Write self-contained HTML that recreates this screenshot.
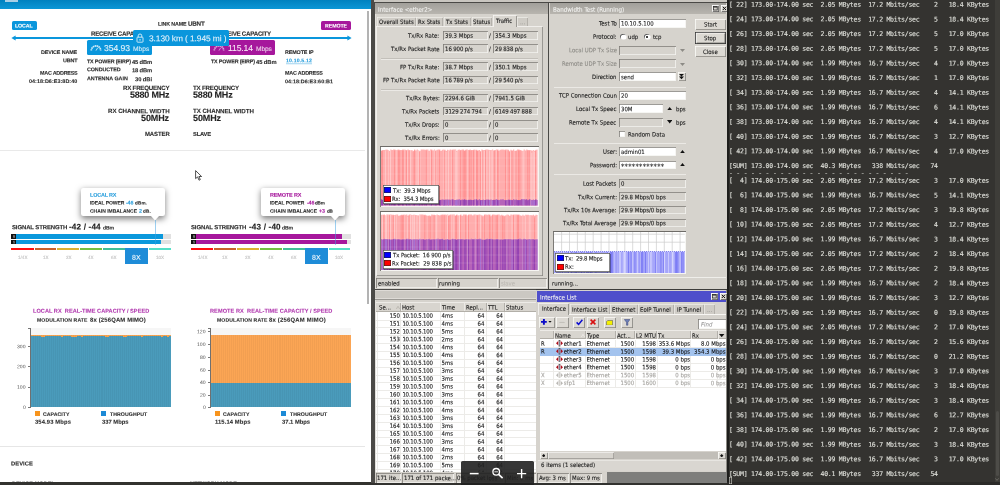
<!DOCTYPE html>
<html><head><meta charset="utf-8"><title>link test</title>
<style>
html,body{margin:0;padding:0;background:#d6d3cd}
#root{position:relative;width:1000px;height:485px;overflow:hidden;background:#d6d3cd;will-change:transform;font-family:"Liberation Sans",sans-serif}
#root div,#root svg,#root span{position:absolute;white-space:pre}
.s{font-family:"Liberation Sans",sans-serif}
.d{-webkit-text-stroke:.1px;font-family:"DejaVu Sans Condensed","DejaVu Sans","Liberation Sans",sans-serif}
.r{left:0;width:1000px;height:7.8px;font-size:6px;line-height:7.8px;color:#141414}
.m{-webkit-text-stroke:.16px;left:729.4px;font-family:"DejaVu Sans Mono","Liberation Mono",monospace;font-size:6.5px;line-height:8px;letter-spacing:-0.2515px;color:#dcddd7}
</style></head><body><div id="root">
<div id="M" style="left:371px;top:0;width:357px;height:485px;background:#d6d3cd"></div>
<div style="left:371.00px;top:0.00px;width:3.60px;height:485.00px;background:#4b4a47;"></div>
<div style="left:374.60px;top:0.00px;width:0.90px;height:485.00px;background:#e3e1dc;"></div>
<div style="left:374.00px;top:0.00px;width:353.00px;height:2.00px;background:#c9c6c0;"></div>
<div style="left:374.00px;top:2.00px;width:353.00px;height:1.00px;background:#4a4946;"></div>
<div style="left:548.40px;top:2.00px;width:1.00px;height:288.00px;background:#4a4946;"></div>
<div style="left:374.60px;top:289.00px;width:352.00px;height:1.10px;background:#4a4946;"></div>
<div style="left:375.00px;top:3.00px;width:173.00px;height:11.20px;background:linear-gradient(#a19f9a,#b8b5af);"></div>
<div class="d" style="left:378.00px;top:5px;transform:matrix(1,.0005,0,1,0,0.75);font-size:6.2px;line-height:8.06px;color:#f4f4f2;">Interface &lt;ether2&gt;</div>
<div style="left:377px;top:17px;width:38.5px;height:9px;background:#d0cdc7;box-shadow:inset .7px .7px 0 #efeeea,inset -.7px 0 0 #a9a6a0"></div>
<div class="d" style="left:378.86px;top:17px;transform:matrix(1,.0005,0,1,0,0.92);font-size:6px;line-height:7.8px;color:#1a1a1a;">Overall Stats</div>
<div style="left:416px;top:17px;width:26.5px;height:9px;background:#d0cdc7;box-shadow:inset .7px .7px 0 #efeeea,inset -.7px 0 0 #a9a6a0"></div>
<div class="d" style="left:418.03px;top:17px;transform:matrix(1,.0005,0,1,0,0.92);font-size:6px;line-height:7.8px;color:#1a1a1a;">Rx Stats</div>
<div style="left:443.5px;top:17px;width:27.0px;height:9px;background:#d0cdc7;box-shadow:inset .7px .7px 0 #efeeea,inset -.7px 0 0 #a9a6a0"></div>
<div class="d" style="left:446.01px;top:17px;transform:matrix(1,.0005,0,1,0,0.92);font-size:6px;line-height:7.8px;color:#1a1a1a;">Tx Stats</div>
<div style="left:471.5px;top:17px;width:20.5px;height:9px;background:#d0cdc7;box-shadow:inset .7px .7px 0 #efeeea,inset -.7px 0 0 #a9a6a0"></div>
<div class="d" style="left:473.15px;top:17px;transform:matrix(1,.0005,0,1,0,0.92);font-size:6px;line-height:7.8px;color:#1a1a1a;">Status</div>
<div style="left:517px;top:17px;width:11px;height:9px;background:#cfccc6;box-shadow:inset .7px .7px 0 #efeeea,inset -.7px 0 0 #a9a6a0"></div>
<div class="d" style="left:519.92px;top:18px;transform:matrix(1,.0005,0,1,0,0.22);font-size:6px;line-height:7.8px;color:#9a9893;">...</div>
<div style="left:376px;top:26px;width:166.5px;height:250px;background:#d9d6d0;box-shadow:inset .8px .8px 0 #f7f6f3,inset -.8px -.8px 0 #8b8984"></div>
<div style="left:492.5px;top:15px;width:24px;height:12px;background:#d9d6d0;box-shadow:inset .8px .8px 0 #f7f6f3,inset -.8px 0 0 #8b8984"></div>
<div class="d" style="left:496.43px;top:16px;transform:matrix(1,.0005,0,1,0,0.92);font-size:6px;line-height:7.8px;color:#1a1a1a;">Traffic</div>
<div class="d" style="left:408.44px;top:31px;transform:matrix(1,.0005,0,1,0,0.82);font-size:6px;line-height:7.8px;color:#1a1a1a;">Tx/Rx Rate:</div>
<div style="left:443.00px;top:31.00px;width:44.60px;height:8.80px;background:#d6d3cd;box-shadow:inset .8px .8px 0 #7d7b76,inset -.8px -.8px 0 #f4f3f0"></div>
<div class="d" style="left:445.20px;top:31px;transform:matrix(1,.0005,0,1,0,0.82);font-size:6px;line-height:7.8px;color:#1a1a1a;">39.3 Mbps</div>
<div class="d" style="left:489.30px;top:31px;transform:matrix(1,.0005,0,1,0,0.82);font-size:6px;line-height:7.8px;color:#1a1a1a;">/</div>
<div style="left:493.00px;top:31.00px;width:45.00px;height:8.80px;background:#d6d3cd;box-shadow:inset .8px .8px 0 #7d7b76,inset -.8px -.8px 0 #f4f3f0"></div>
<div class="d" style="left:495.20px;top:31px;transform:matrix(1,.0005,0,1,0,0.82);font-size:6px;line-height:7.8px;color:#1a1a1a;">354.3 Mbps</div>
<div class="d" style="left:390.94px;top:45px;transform:matrix(1,.0005,0,1,0,0.12);font-size:6px;line-height:7.8px;color:#1a1a1a;">Tx/Rx Packet Rate</div>
<div style="left:443.00px;top:44.30px;width:44.60px;height:8.80px;background:#d6d3cd;box-shadow:inset .8px .8px 0 #7d7b76,inset -.8px -.8px 0 #f4f3f0"></div>
<div class="d" style="left:445.20px;top:45px;transform:matrix(1,.0005,0,1,0,0.12);font-size:6px;line-height:7.8px;color:#1a1a1a;word-spacing:-.45px;">16 900 p/s</div>
<div class="d" style="left:489.30px;top:45px;transform:matrix(1,.0005,0,1,0,0.12);font-size:6px;line-height:7.8px;color:#1a1a1a;">/</div>
<div style="left:493.00px;top:44.30px;width:45.00px;height:8.80px;background:#d6d3cd;box-shadow:inset .8px .8px 0 #7d7b76,inset -.8px -.8px 0 #f4f3f0"></div>
<div class="d" style="left:495.20px;top:45px;transform:matrix(1,.0005,0,1,0,0.12);font-size:6px;line-height:7.8px;color:#1a1a1a;word-spacing:-.45px;">29 838 p/s</div>
<div class="d" style="left:400.37px;top:63px;transform:matrix(1,.0005,0,1,0,0.22);font-size:6px;line-height:7.8px;color:#1a1a1a;">FP Tx/Rx Rate:</div>
<div style="left:443.00px;top:62.40px;width:44.60px;height:8.80px;background:#d6d3cd;box-shadow:inset .8px .8px 0 #7d7b76,inset -.8px -.8px 0 #f4f3f0"></div>
<div class="d" style="left:445.20px;top:63px;transform:matrix(1,.0005,0,1,0,0.22);font-size:6px;line-height:7.8px;color:#1a1a1a;">38.7 Mbps</div>
<div class="d" style="left:489.30px;top:63px;transform:matrix(1,.0005,0,1,0,0.22);font-size:6px;line-height:7.8px;color:#1a1a1a;">/</div>
<div style="left:493.00px;top:62.40px;width:45.00px;height:8.80px;background:#d6d3cd;box-shadow:inset .8px .8px 0 #7d7b76,inset -.8px -.8px 0 #f4f3f0"></div>
<div class="d" style="left:495.20px;top:63px;transform:matrix(1,.0005,0,1,0,0.22);font-size:6px;line-height:7.8px;color:#1a1a1a;">350.1 Mbps</div>
<div class="d" style="left:382.87px;top:76px;transform:matrix(1,.0005,0,1,0,0.32);font-size:6px;line-height:7.8px;color:#1a1a1a;">FP Tx/Rx Packet Rate</div>
<div style="left:443.00px;top:75.50px;width:44.60px;height:8.80px;background:#d6d3cd;box-shadow:inset .8px .8px 0 #7d7b76,inset -.8px -.8px 0 #f4f3f0"></div>
<div class="d" style="left:445.20px;top:76px;transform:matrix(1,.0005,0,1,0,0.32);font-size:6px;line-height:7.8px;color:#1a1a1a;word-spacing:-.45px;">16 789 p/s</div>
<div class="d" style="left:489.30px;top:76px;transform:matrix(1,.0005,0,1,0,0.32);font-size:6px;line-height:7.8px;color:#1a1a1a;">/</div>
<div style="left:493.00px;top:75.50px;width:45.00px;height:8.80px;background:#d6d3cd;box-shadow:inset .8px .8px 0 #7d7b76,inset -.8px -.8px 0 #f4f3f0"></div>
<div class="d" style="left:495.20px;top:76px;transform:matrix(1,.0005,0,1,0,0.32);font-size:6px;line-height:7.8px;color:#1a1a1a;word-spacing:-.45px;">29 540 p/s</div>
<div class="d" style="left:405.66px;top:94px;transform:matrix(1,.0005,0,1,0,0.32);font-size:6px;line-height:7.8px;color:#1a1a1a;">Tx/Rx Bytes:</div>
<div style="left:443.00px;top:93.50px;width:44.60px;height:8.80px;background:#d6d3cd;box-shadow:inset .8px .8px 0 #7d7b76,inset -.8px -.8px 0 #f4f3f0"></div>
<div class="d" style="left:445.20px;top:94px;transform:matrix(1,.0005,0,1,0,0.32);font-size:6px;line-height:7.8px;color:#1a1a1a;">2294.6 GiB</div>
<div class="d" style="left:489.30px;top:94px;transform:matrix(1,.0005,0,1,0,0.32);font-size:6px;line-height:7.8px;color:#1a1a1a;">/</div>
<div style="left:493.00px;top:93.50px;width:45.00px;height:8.80px;background:#d6d3cd;box-shadow:inset .8px .8px 0 #7d7b76,inset -.8px -.8px 0 #f4f3f0"></div>
<div class="d" style="left:495.20px;top:94px;transform:matrix(1,.0005,0,1,0,0.32);font-size:6px;line-height:7.8px;color:#1a1a1a;">7941.5 GiB</div>
<div class="d" style="left:402.21px;top:107px;transform:matrix(1,.0005,0,1,0,0.52);font-size:6px;line-height:7.8px;color:#1a1a1a;">Tx/Rx Packets</div>
<div style="left:443.00px;top:106.70px;width:44.60px;height:8.80px;background:#d6d3cd;box-shadow:inset .8px .8px 0 #7d7b76,inset -.8px -.8px 0 #f4f3f0"></div>
<div class="d" style="left:445.20px;top:107px;transform:matrix(1,.0005,0,1,0,0.52);font-size:6px;line-height:7.8px;color:#1a1a1a;word-spacing:-.45px;">3129 274 794</div>
<div class="d" style="left:489.30px;top:107px;transform:matrix(1,.0005,0,1,0,0.52);font-size:6px;line-height:7.8px;color:#1a1a1a;">/</div>
<div style="left:493.00px;top:106.70px;width:45.00px;height:8.80px;background:#d6d3cd;box-shadow:inset .8px .8px 0 #7d7b76,inset -.8px -.8px 0 #f4f3f0"></div>
<div class="d" style="left:495.20px;top:107px;transform:matrix(1,.0005,0,1,0,0.52);font-size:6px;line-height:7.8px;color:#1a1a1a;word-spacing:-.45px;">6149 497 888</div>
<div class="d" style="left:405.02px;top:120px;transform:matrix(1,.0005,0,1,0,0.82);font-size:6px;line-height:7.8px;color:#1a1a1a;">Tx/Rx Drops:</div>
<div style="left:443.00px;top:120.00px;width:44.60px;height:8.80px;background:#d6d3cd;box-shadow:inset .8px .8px 0 #7d7b76,inset -.8px -.8px 0 #f4f3f0"></div>
<div class="d" style="left:445.20px;top:120px;transform:matrix(1,.0005,0,1,0,0.82);font-size:6px;line-height:7.8px;color:#1a1a1a;">0</div>
<div class="d" style="left:489.30px;top:120px;transform:matrix(1,.0005,0,1,0,0.82);font-size:6px;line-height:7.8px;color:#1a1a1a;">/</div>
<div style="left:493.00px;top:120.00px;width:45.00px;height:8.80px;background:#d6d3cd;box-shadow:inset .8px .8px 0 #7d7b76,inset -.8px -.8px 0 #f4f3f0"></div>
<div class="d" style="left:495.20px;top:120px;transform:matrix(1,.0005,0,1,0,0.82);font-size:6px;line-height:7.8px;color:#1a1a1a;">0</div>
<div class="d" style="left:404.87px;top:134px;transform:matrix(1,.0005,0,1,0,0.02);font-size:6px;line-height:7.8px;color:#1a1a1a;">Tx/Rx Errors:</div>
<div style="left:443.00px;top:133.20px;width:44.60px;height:8.80px;background:#d6d3cd;box-shadow:inset .8px .8px 0 #7d7b76,inset -.8px -.8px 0 #f4f3f0"></div>
<div class="d" style="left:445.20px;top:134px;transform:matrix(1,.0005,0,1,0,0.02);font-size:6px;line-height:7.8px;color:#1a1a1a;">0</div>
<div class="d" style="left:489.30px;top:134px;transform:matrix(1,.0005,0,1,0,0.02);font-size:6px;line-height:7.8px;color:#1a1a1a;">/</div>
<div style="left:493.00px;top:133.20px;width:45.00px;height:8.80px;background:#d6d3cd;box-shadow:inset .8px .8px 0 #7d7b76,inset -.8px -.8px 0 #f4f3f0"></div>
<div class="d" style="left:495.20px;top:134px;transform:matrix(1,.0005,0,1,0,0.02);font-size:6px;line-height:7.8px;color:#1a1a1a;">0</div>
<div style="left:381.00px;top:58.10px;width:157.00px;height:0.60px;background:#c3c0ba;"></div>
<div style="left:381.00px;top:58.70px;width:157.00px;height:0.60px;background:#ebe9e5;"></div>
<div style="left:381.00px;top:89.20px;width:157.00px;height:0.60px;background:#c3c0ba;"></div>
<div style="left:381.00px;top:89.80px;width:157.00px;height:0.60px;background:#ebe9e5;"></div>
<div style="left:380px;top:146px;width:158.5px;height:60.5px;background:#fff;box-shadow:inset .9px .9px 0 #6e6c68,inset -.9px -.9px 0 #f6f5f2"></div>
<svg style="left:381px;top:147px" width="156.5" height="58.5" viewBox="0 0 156.5 58.5"><rect x="0" y="3.80" width="156.5" height="54.70" fill="#ffadad"/><rect x="0" y="53.00" width="156.5" height="5.50" fill="#b663b9"/><path d="M0.00 3.50h1.32V4.00h-1.32ZM1.32 2.90h1.32V4.00h-1.32ZM2.64 3.10h1.32V4.00h-1.32ZM3.96 2.80h1.32V4.00h-1.32ZM5.28 2.60h1.32V4.00h-1.32ZM6.60 3.10h1.32V4.00h-1.32ZM7.92 5.10h1.32V4.00h-1.32ZM9.24 2.60h1.32V4.00h-1.32ZM10.56 2.90h1.32V4.00h-1.32ZM11.88 2.60h1.32V4.00h-1.32ZM13.20 2.60h1.32V4.00h-1.32ZM14.52 3.10h1.32V4.00h-1.32ZM15.84 2.80h1.32V4.00h-1.32ZM17.16 2.60h1.32V4.00h-1.32ZM18.48 2.90h1.32V4.00h-1.32ZM19.80 2.90h1.32V4.00h-1.32ZM21.12 2.60h1.32V4.00h-1.32ZM22.44 2.60h1.32V4.00h-1.32ZM23.76 2.80h1.32V4.00h-1.32ZM25.08 3.10h1.32V4.00h-1.32ZM26.40 2.60h1.32V4.00h-1.32ZM27.72 3.10h1.32V4.00h-1.32ZM29.04 3.50h1.32V4.00h-1.32ZM30.36 3.10h1.32V4.00h-1.32ZM31.68 4.20h1.32V4.00h-1.32ZM33.00 2.60h1.32V4.00h-1.32ZM34.32 3.50h1.32V4.00h-1.32ZM35.64 2.60h1.32V4.00h-1.32ZM36.96 3.50h1.32V4.00h-1.32ZM38.28 4.20h1.32V4.00h-1.32ZM39.60 2.60h1.32V4.00h-1.32ZM40.92 2.60h1.32V4.00h-1.32ZM42.24 2.60h1.32V4.00h-1.32ZM43.56 2.80h1.32V4.00h-1.32ZM44.88 2.60h1.32V4.00h-1.32ZM46.20 2.60h1.32V4.00h-1.32ZM47.52 5.10h1.32V4.00h-1.32ZM48.84 2.60h1.32V4.00h-1.32ZM50.16 2.60h1.32V4.00h-1.32ZM51.48 3.50h1.32V4.00h-1.32ZM52.80 2.60h1.32V4.00h-1.32ZM54.12 3.50h1.32V4.00h-1.32ZM55.44 2.80h1.32V4.00h-1.32ZM56.76 2.60h1.32V4.00h-1.32ZM58.08 2.60h1.32V4.00h-1.32ZM59.40 4.20h1.32V4.00h-1.32ZM60.72 2.80h1.32V4.00h-1.32ZM62.04 2.60h1.32V4.00h-1.32ZM63.36 2.80h1.32V4.00h-1.32ZM64.68 4.20h1.32V4.00h-1.32ZM66.00 2.80h1.32V4.00h-1.32ZM67.32 3.50h1.32V4.00h-1.32ZM68.64 2.60h1.32V4.00h-1.32ZM69.96 2.80h1.32V4.00h-1.32ZM71.28 2.60h1.32V4.00h-1.32ZM72.60 2.60h1.32V4.00h-1.32ZM73.92 2.60h1.32V4.00h-1.32ZM75.24 4.20h1.32V4.00h-1.32ZM76.56 2.80h1.32V4.00h-1.32ZM77.88 2.60h1.32V4.00h-1.32ZM79.20 2.90h1.32V4.00h-1.32ZM80.52 2.60h1.32V4.00h-1.32ZM81.84 2.60h1.32V4.00h-1.32ZM83.16 3.50h1.32V4.00h-1.32ZM84.48 2.60h1.32V4.00h-1.32ZM85.80 2.60h1.32V4.00h-1.32ZM87.12 3.10h1.32V4.00h-1.32ZM88.44 2.60h1.32V4.00h-1.32ZM89.76 2.90h1.32V4.00h-1.32ZM91.08 3.10h1.32V4.00h-1.32ZM92.40 2.60h1.32V4.00h-1.32ZM93.72 2.80h1.32V4.00h-1.32ZM95.04 2.80h1.32V4.00h-1.32ZM96.36 3.50h1.32V4.00h-1.32ZM97.68 2.90h1.32V4.00h-1.32ZM99.00 4.50h1.32V4.00h-1.32ZM100.32 2.60h1.32V4.00h-1.32ZM101.64 2.90h1.32V4.00h-1.32ZM102.96 3.10h1.32V4.00h-1.32ZM104.28 2.60h1.32V4.00h-1.32ZM105.60 2.60h1.32V4.00h-1.32ZM106.92 2.80h1.32V4.00h-1.32ZM108.24 2.90h1.32V4.00h-1.32ZM109.56 2.90h1.32V4.00h-1.32ZM110.88 2.60h1.32V4.00h-1.32ZM112.20 3.50h1.32V4.00h-1.32ZM113.52 2.90h1.32V4.00h-1.32ZM114.84 2.60h1.32V4.00h-1.32ZM116.16 2.60h1.32V4.00h-1.32ZM117.48 3.50h1.32V4.00h-1.32ZM118.80 2.80h1.32V4.00h-1.32ZM120.12 2.60h1.32V4.00h-1.32ZM121.44 2.60h1.32V4.00h-1.32ZM122.76 2.80h1.32V4.00h-1.32ZM124.08 2.60h1.32V4.00h-1.32ZM125.40 2.60h1.32V4.00h-1.32ZM126.72 2.80h1.32V4.00h-1.32ZM128.04 4.50h1.32V4.00h-1.32ZM129.36 2.80h1.32V4.00h-1.32ZM130.68 3.50h1.32V4.00h-1.32ZM132.00 2.60h1.32V4.00h-1.32ZM133.32 4.20h1.32V4.00h-1.32ZM134.64 3.50h1.32V4.00h-1.32ZM135.96 2.60h1.32V4.00h-1.32ZM137.28 2.60h1.32V4.00h-1.32ZM138.60 2.90h1.32V4.00h-1.32ZM139.92 3.50h1.32V4.00h-1.32ZM141.24 5.10h1.32V4.00h-1.32ZM142.56 2.60h1.32V4.00h-1.32ZM143.88 3.50h1.32V4.00h-1.32ZM145.20 2.60h1.32V4.00h-1.32ZM146.52 2.90h1.32V4.00h-1.32ZM147.84 3.10h1.32V4.00h-1.32ZM149.16 3.10h1.32V4.00h-1.32ZM150.48 5.10h1.32V4.00h-1.32ZM151.80 2.90h1.32V4.00h-1.32ZM153.12 4.20h1.32V4.00h-1.32ZM154.44 2.80h1.32V4.00h-1.32ZM155.76 2.60h0.74V4.00h-0.74Z" fill="#ffadad"/><path d="M0.00 52.30h1.32V53.20h-1.32ZM1.32 52.80h1.32V53.20h-1.32ZM2.64 52.80h1.32V53.20h-1.32ZM3.96 52.90h1.32V53.20h-1.32ZM5.28 52.90h1.32V53.20h-1.32ZM6.60 52.90h1.32V53.20h-1.32ZM7.92 52.90h1.32V53.20h-1.32ZM9.24 52.80h1.32V53.20h-1.32ZM10.56 52.30h1.32V53.20h-1.32ZM11.88 52.60h1.32V53.20h-1.32ZM13.20 52.30h1.32V53.20h-1.32ZM14.52 52.60h1.32V53.20h-1.32ZM15.84 52.90h1.32V53.20h-1.32ZM17.16 52.60h1.32V53.20h-1.32ZM18.48 52.60h1.32V53.20h-1.32ZM19.80 52.80h1.32V53.20h-1.32ZM21.12 52.60h1.32V53.20h-1.32ZM22.44 52.80h1.32V53.20h-1.32ZM23.76 53.10h1.32V53.20h-1.32ZM25.08 52.60h1.32V53.20h-1.32ZM26.40 52.60h1.32V53.20h-1.32ZM27.72 52.90h1.32V53.20h-1.32ZM29.04 52.60h1.32V53.20h-1.32ZM30.36 52.60h1.32V53.20h-1.32ZM31.68 52.90h1.32V53.20h-1.32ZM33.00 52.30h1.32V53.20h-1.32ZM34.32 52.60h1.32V53.20h-1.32ZM35.64 53.10h1.32V53.20h-1.32ZM36.96 53.10h1.32V53.20h-1.32ZM38.28 52.90h1.32V53.20h-1.32ZM39.60 53.10h1.32V53.20h-1.32ZM40.92 52.30h1.32V53.20h-1.32ZM42.24 52.80h1.32V53.20h-1.32ZM43.56 52.90h1.32V53.20h-1.32ZM44.88 52.60h1.32V53.20h-1.32ZM46.20 52.30h1.32V53.20h-1.32ZM47.52 52.60h1.32V53.20h-1.32ZM48.84 53.10h1.32V53.20h-1.32ZM50.16 52.30h1.32V53.20h-1.32ZM51.48 52.90h1.32V53.20h-1.32ZM52.80 52.80h1.32V53.20h-1.32ZM54.12 52.90h1.32V53.20h-1.32ZM55.44 52.80h1.32V53.20h-1.32ZM56.76 52.30h1.32V53.20h-1.32ZM58.08 53.10h1.32V53.20h-1.32ZM59.40 52.80h1.32V53.20h-1.32ZM60.72 52.60h1.32V53.20h-1.32ZM62.04 52.60h1.32V53.20h-1.32ZM63.36 52.60h1.32V53.20h-1.32ZM64.68 52.60h1.32V53.20h-1.32ZM66.00 52.60h1.32V53.20h-1.32ZM67.32 52.60h1.32V53.20h-1.32ZM68.64 52.80h1.32V53.20h-1.32ZM69.96 52.60h1.32V53.20h-1.32ZM71.28 52.30h1.32V53.20h-1.32ZM72.60 52.90h1.32V53.20h-1.32ZM73.92 52.90h1.32V53.20h-1.32ZM75.24 52.60h1.32V53.20h-1.32ZM76.56 52.60h1.32V53.20h-1.32ZM77.88 52.30h1.32V53.20h-1.32ZM79.20 52.90h1.32V53.20h-1.32ZM80.52 52.60h1.32V53.20h-1.32ZM81.84 52.60h1.32V53.20h-1.32ZM83.16 52.30h1.32V53.20h-1.32ZM84.48 52.80h1.32V53.20h-1.32ZM85.80 53.10h1.32V53.20h-1.32ZM87.12 52.80h1.32V53.20h-1.32ZM88.44 52.60h1.32V53.20h-1.32ZM89.76 52.80h1.32V53.20h-1.32ZM91.08 53.10h1.32V53.20h-1.32ZM92.40 52.60h1.32V53.20h-1.32ZM93.72 52.60h1.32V53.20h-1.32ZM95.04 52.30h1.32V53.20h-1.32ZM96.36 53.10h1.32V53.20h-1.32ZM97.68 52.30h1.32V53.20h-1.32ZM99.00 52.90h1.32V53.20h-1.32ZM100.32 53.10h1.32V53.20h-1.32ZM101.64 52.60h1.32V53.20h-1.32ZM102.96 53.10h1.32V53.20h-1.32ZM104.28 52.60h1.32V53.20h-1.32ZM105.60 52.60h1.32V53.20h-1.32ZM106.92 52.60h1.32V53.20h-1.32ZM108.24 52.80h1.32V53.20h-1.32ZM109.56 52.60h1.32V53.20h-1.32ZM110.88 53.10h1.32V53.20h-1.32ZM112.20 52.80h1.32V53.20h-1.32ZM113.52 52.80h1.32V53.20h-1.32ZM114.84 52.30h1.32V53.20h-1.32ZM116.16 52.60h1.32V53.20h-1.32ZM117.48 52.90h1.32V53.20h-1.32ZM118.80 52.60h1.32V53.20h-1.32ZM120.12 52.60h1.32V53.20h-1.32ZM121.44 52.30h1.32V53.20h-1.32ZM122.76 53.10h1.32V53.20h-1.32ZM124.08 53.10h1.32V53.20h-1.32ZM125.40 52.90h1.32V53.20h-1.32ZM126.72 52.60h1.32V53.20h-1.32ZM128.04 52.60h1.32V53.20h-1.32ZM129.36 52.80h1.32V53.20h-1.32ZM130.68 52.90h1.32V53.20h-1.32ZM132.00 52.30h1.32V53.20h-1.32ZM133.32 52.80h1.32V53.20h-1.32ZM134.64 52.60h1.32V53.20h-1.32ZM135.96 52.90h1.32V53.20h-1.32ZM137.28 52.90h1.32V53.20h-1.32ZM138.60 52.90h1.32V53.20h-1.32ZM139.92 52.30h1.32V53.20h-1.32ZM141.24 52.30h1.32V53.20h-1.32ZM142.56 52.30h1.32V53.20h-1.32ZM143.88 52.60h1.32V53.20h-1.32ZM145.20 52.30h1.32V53.20h-1.32ZM146.52 53.10h1.32V53.20h-1.32ZM147.84 52.30h1.32V53.20h-1.32ZM149.16 52.60h1.32V53.20h-1.32ZM150.48 53.10h1.32V53.20h-1.32ZM151.80 52.60h1.32V53.20h-1.32ZM153.12 53.10h1.32V53.20h-1.32ZM154.44 52.30h1.32V53.20h-1.32ZM155.76 52.90h0.74V53.20h-0.74Z" fill="#b663b9"/><path d="M0.00 4.10h.6V52.30h-.6ZM1.32 3.50h.6V52.80h-.6ZM13.20 3.20h.6V52.30h-.6ZM17.16 3.20h.6V52.60h-.6ZM18.48 3.50h.6V52.60h-.6ZM21.12 3.20h.6V52.60h-.6ZM22.44 3.20h.6V52.80h-.6ZM25.08 3.70h.6V52.60h-.6ZM27.72 3.70h.6V52.90h-.6ZM31.68 4.80h.6V52.90h-.6ZM33.00 3.20h.6V52.30h-.6ZM38.28 4.80h.6V52.90h-.6ZM44.88 3.20h.6V52.60h-.6ZM50.16 3.20h.6V52.30h-.6ZM54.12 4.10h.6V52.90h-.6ZM58.08 3.20h.6V53.10h-.6ZM63.36 3.40h.6V52.60h-.6ZM71.28 3.20h.6V52.30h-.6ZM77.88 3.20h.6V52.30h-.6ZM79.20 3.50h.6V52.90h-.6ZM81.84 3.20h.6V52.60h-.6ZM83.16 4.10h.6V52.30h-.6ZM84.48 3.20h.6V52.80h-.6ZM88.44 3.20h.6V52.60h-.6ZM89.76 3.50h.6V52.80h-.6ZM92.40 3.20h.6V52.60h-.6ZM95.04 3.40h.6V52.30h-.6ZM96.36 4.10h.6V53.10h-.6ZM99.00 5.10h.6V52.90h-.6ZM101.64 3.50h.6V52.60h-.6ZM104.28 3.20h.6V52.60h-.6ZM113.52 3.50h.6V52.80h-.6ZM116.16 3.20h.6V52.60h-.6ZM117.48 4.10h.6V52.90h-.6ZM124.08 3.20h.6V53.10h-.6ZM126.72 3.40h.6V52.60h-.6ZM128.04 5.10h.6V52.60h-.6ZM130.68 4.10h.6V52.90h-.6ZM134.64 4.10h.6V52.60h-.6ZM137.28 3.20h.6V52.90h-.6ZM138.60 3.50h.6V52.90h-.6ZM146.52 3.50h.6V53.10h-.6ZM147.84 3.70h.6V52.30h-.6ZM154.44 3.40h.6V52.30h-.6Z" fill="#ff8282"/><path d="M0.00 52.60h.7V58.5h-.7ZM1.32 53.10h.7V58.5h-.7ZM13.20 52.60h.7V58.5h-.7ZM17.16 52.90h.7V58.5h-.7ZM18.48 52.90h.7V58.5h-.7ZM21.12 52.90h.7V58.5h-.7ZM22.44 53.10h.7V58.5h-.7ZM25.08 52.90h.7V58.5h-.7ZM27.72 53.20h.7V58.5h-.7ZM31.68 53.20h.7V58.5h-.7ZM33.00 52.60h.7V58.5h-.7ZM38.28 53.20h.7V58.5h-.7ZM44.88 52.90h.7V58.5h-.7ZM50.16 52.60h.7V58.5h-.7ZM54.12 53.20h.7V58.5h-.7ZM58.08 53.40h.7V58.5h-.7ZM63.36 52.90h.7V58.5h-.7ZM71.28 52.60h.7V58.5h-.7ZM77.88 52.60h.7V58.5h-.7ZM79.20 53.20h.7V58.5h-.7ZM81.84 52.90h.7V58.5h-.7ZM83.16 52.60h.7V58.5h-.7ZM84.48 53.10h.7V58.5h-.7ZM88.44 52.90h.7V58.5h-.7ZM89.76 53.10h.7V58.5h-.7ZM92.40 52.90h.7V58.5h-.7ZM95.04 52.60h.7V58.5h-.7ZM96.36 53.40h.7V58.5h-.7ZM99.00 53.20h.7V58.5h-.7ZM101.64 52.90h.7V58.5h-.7ZM104.28 52.90h.7V58.5h-.7ZM113.52 53.10h.7V58.5h-.7ZM116.16 52.90h.7V58.5h-.7ZM117.48 53.20h.7V58.5h-.7ZM124.08 53.40h.7V58.5h-.7ZM126.72 52.90h.7V58.5h-.7ZM128.04 52.90h.7V58.5h-.7ZM130.68 53.20h.7V58.5h-.7ZM134.64 52.90h.7V58.5h-.7ZM137.28 53.20h.7V58.5h-.7ZM138.60 53.20h.7V58.5h-.7ZM146.52 53.40h.7V58.5h-.7ZM147.84 52.60h.7V58.5h-.7ZM154.44 52.60h.7V58.5h-.7Z" fill="#8636b0"/><path d="M3.96 3.40h.7V52.90h-.7ZM9.24 3.20h.7V52.80h-.7ZM26.40 3.20h.7V52.60h-.7ZM29.04 4.10h.7V52.60h-.7ZM35.64 3.20h.7V53.10h-.7ZM36.96 4.10h.7V53.10h-.7ZM48.84 3.20h.7V53.10h-.7ZM52.80 3.20h.7V52.80h-.7ZM64.68 4.80h.7V52.60h-.7ZM67.32 4.10h.7V52.60h-.7ZM73.92 3.20h.7V52.90h-.7ZM75.24 4.80h.7V52.60h-.7ZM76.56 3.40h.7V52.60h-.7ZM100.32 3.20h.7V53.10h-.7ZM102.96 3.70h.7V53.10h-.7ZM105.60 3.20h.7V52.60h-.7ZM108.24 3.50h.7V52.80h-.7ZM110.88 3.20h.7V53.10h-.7ZM114.84 3.20h.7V52.30h-.7ZM129.36 3.40h.7V52.80h-.7ZM142.56 3.20h.7V52.30h-.7ZM150.48 5.70h.7V53.10h-.7ZM151.80 3.50h.7V52.60h-.7ZM153.12 4.80h.7V53.10h-.7ZM155.76 3.20h.7V52.90h-.7Z" fill="#ffd2d2"/><path d="M3.96 53.20h.7V58.5h-.7ZM9.24 53.10h.7V58.5h-.7ZM26.40 52.90h.7V58.5h-.7ZM29.04 52.90h.7V58.5h-.7ZM35.64 53.40h.7V58.5h-.7ZM36.96 53.40h.7V58.5h-.7ZM48.84 53.40h.7V58.5h-.7ZM52.80 53.10h.7V58.5h-.7ZM64.68 52.90h.7V58.5h-.7ZM67.32 52.90h.7V58.5h-.7ZM73.92 53.20h.7V58.5h-.7ZM75.24 52.90h.7V58.5h-.7ZM76.56 52.90h.7V58.5h-.7ZM100.32 53.40h.7V58.5h-.7ZM102.96 53.40h.7V58.5h-.7ZM105.60 52.90h.7V58.5h-.7ZM108.24 53.10h.7V58.5h-.7ZM110.88 53.40h.7V58.5h-.7ZM114.84 52.60h.7V58.5h-.7ZM129.36 53.10h.7V58.5h-.7ZM142.56 52.60h.7V58.5h-.7ZM150.48 53.40h.7V58.5h-.7ZM151.80 52.90h.7V58.5h-.7ZM153.12 53.40h.7V58.5h-.7ZM155.76 53.20h.7V58.5h-.7Z" fill="#a078dc"/><path d="M7.92 53.20h.6V58.5h-.6ZM10.56 52.60h.6V58.5h-.6ZM11.88 52.90h.6V58.5h-.6ZM14.52 52.90h.6V58.5h-.6ZM39.60 53.40h.6V58.5h-.6ZM40.92 52.60h.6V58.5h-.6ZM43.56 53.20h.6V58.5h-.6ZM55.44 53.10h.6V58.5h-.6ZM59.40 53.10h.6V58.5h-.6ZM62.04 52.90h.6V58.5h-.6ZM85.80 53.40h.6V58.5h-.6ZM87.12 53.10h.6V58.5h-.6ZM106.92 52.90h.6V58.5h-.6ZM112.20 53.10h.6V58.5h-.6ZM125.40 53.20h.6V58.5h-.6ZM133.32 53.10h.6V58.5h-.6ZM135.96 53.20h.6V58.5h-.6ZM139.92 52.60h.6V58.5h-.6ZM141.24 52.60h.6V58.5h-.6ZM143.88 52.90h.6V58.5h-.6ZM145.20 52.60h.6V58.5h-.6Z" fill="#8e3cb4"/><path d="M7.50 0V58.5M15.40 0V58.5M23.30 0V58.5M31.20 0V58.5M39.10 0V58.5M47.00 0V58.5M54.90 0V58.5M62.80 0V58.5M70.70 0V58.5M78.60 0V58.5M86.50 0V58.5M94.40 0V58.5M102.30 0V58.5M110.20 0V58.5M118.10 0V58.5M126.00 0V58.5M133.90 0V58.5M141.80 0V58.5M149.70 0V58.5" stroke="#fff" stroke-opacity=".32" stroke-width=".7" fill="none"/><path d="M0 51.00H156.5M0 43.00H156.5M0 35.00H156.5M0 27.00H156.5M0 19.00H156.5M0 11.00H156.5M0 3.00H156.5" stroke="#fff" stroke-opacity=".2" stroke-width=".6" fill="none"/></svg>
<div style="left:382.5px;top:185.3px;width:56px;height:18.8px;background:#fff;box-shadow:inset 0 0 0 .7px #555,1px 1px 0 rgba(0,0,0,.35)"></div>
<div style="left:384.20px;top:187.40px;width:6.80px;height:6.00px;background:#0000fe;box-shadow:inset 0 0 0 .5px #222"></div>
<div style="left:384.20px;top:195.60px;width:6.80px;height:6.00px;background:#fe0000;box-shadow:inset 0 0 0 .5px #222"></div>
<div class="d" style="left:392.50px;top:186px;transform:matrix(1,.0005,0,1,0,0.72);font-size:6px;line-height:7.8px;color:#1a1a1a;letter-spacing:-0.164px;">Tx:  39.3 Mbps</div>
<div class="d" style="left:392.30px;top:194px;transform:matrix(1,.0005,0,1,0,0.92);font-size:6px;line-height:7.8px;color:#1a1a1a;letter-spacing:-0.146px;">Rx:  354.3 Mbps</div>
<div style="left:380px;top:210.5px;width:158.5px;height:60.5px;background:#fff;box-shadow:inset .9px .9px 0 #6e6c68,inset -.9px -.9px 0 #f6f5f2"></div>
<svg style="left:381px;top:211.5px" width="156.5" height="58.5" viewBox="0 0 156.5 58.5"><rect x="0" y="3.70" width="156.5" height="54.80" fill="#ffadad"/><rect x="0" y="27.50" width="156.5" height="31.00" fill="#b663b9"/><path d="M0.00 2.70h1.32V3.90h-1.32ZM1.32 2.70h1.32V3.90h-1.32ZM2.64 2.50h1.32V3.90h-1.32ZM3.96 3.40h1.32V3.90h-1.32ZM5.28 2.50h1.32V3.90h-1.32ZM6.60 2.50h1.32V3.90h-1.32ZM7.92 2.50h1.32V3.90h-1.32ZM9.24 2.50h1.32V3.90h-1.32ZM10.56 2.80h1.32V3.90h-1.32ZM11.88 2.70h1.32V3.90h-1.32ZM13.20 3.00h1.32V3.90h-1.32ZM14.52 2.50h1.32V3.90h-1.32ZM15.84 2.50h1.32V3.90h-1.32ZM17.16 4.10h1.32V3.90h-1.32ZM18.48 3.40h1.32V3.90h-1.32ZM19.80 2.70h1.32V3.90h-1.32ZM21.12 2.80h1.32V3.90h-1.32ZM22.44 2.50h1.32V3.90h-1.32ZM23.76 2.80h1.32V3.90h-1.32ZM25.08 2.50h1.32V3.90h-1.32ZM26.40 4.10h1.32V3.90h-1.32ZM27.72 2.50h1.32V3.90h-1.32ZM29.04 2.50h1.32V3.90h-1.32ZM30.36 3.00h1.32V3.90h-1.32ZM31.68 2.80h1.32V3.90h-1.32ZM33.00 2.70h1.32V3.90h-1.32ZM34.32 3.00h1.32V3.90h-1.32ZM35.64 3.40h1.32V3.90h-1.32ZM36.96 3.40h1.32V3.90h-1.32ZM38.28 2.50h1.32V3.90h-1.32ZM39.60 2.50h1.32V3.90h-1.32ZM40.92 2.50h1.32V3.90h-1.32ZM42.24 2.80h1.32V3.90h-1.32ZM43.56 2.70h1.32V3.90h-1.32ZM44.88 3.40h1.32V3.90h-1.32ZM46.20 4.10h1.32V3.90h-1.32ZM47.52 3.40h1.32V3.90h-1.32ZM48.84 4.10h1.32V3.90h-1.32ZM50.16 2.50h1.32V3.90h-1.32ZM51.48 2.80h1.32V3.90h-1.32ZM52.80 2.70h1.32V3.90h-1.32ZM54.12 3.00h1.32V3.90h-1.32ZM55.44 2.50h1.32V3.90h-1.32ZM56.76 3.00h1.32V3.90h-1.32ZM58.08 3.40h1.32V3.90h-1.32ZM59.40 2.70h1.32V3.90h-1.32ZM60.72 2.50h1.32V3.90h-1.32ZM62.04 2.50h1.32V3.90h-1.32ZM63.36 2.50h1.32V3.90h-1.32ZM64.68 2.70h1.32V3.90h-1.32ZM66.00 2.50h1.32V3.90h-1.32ZM67.32 3.40h1.32V3.90h-1.32ZM68.64 2.50h1.32V3.90h-1.32ZM69.96 2.50h1.32V3.90h-1.32ZM71.28 2.50h1.32V3.90h-1.32ZM72.60 2.50h1.32V3.90h-1.32ZM73.92 3.40h1.32V3.90h-1.32ZM75.24 2.50h1.32V3.90h-1.32ZM76.56 3.40h1.32V3.90h-1.32ZM77.88 3.40h1.32V3.90h-1.32ZM79.20 2.50h1.32V3.90h-1.32ZM80.52 4.10h1.32V3.90h-1.32ZM81.84 2.50h1.32V3.90h-1.32ZM83.16 2.50h1.32V3.90h-1.32ZM84.48 2.50h1.32V3.90h-1.32ZM85.80 3.40h1.32V3.90h-1.32ZM87.12 2.50h1.32V3.90h-1.32ZM88.44 2.50h1.32V3.90h-1.32ZM89.76 2.50h1.32V3.90h-1.32ZM91.08 3.40h1.32V3.90h-1.32ZM92.40 2.50h1.32V3.90h-1.32ZM93.72 2.50h1.32V3.90h-1.32ZM95.04 2.70h1.32V3.90h-1.32ZM96.36 2.70h1.32V3.90h-1.32ZM97.68 2.50h1.32V3.90h-1.32ZM99.00 2.70h1.32V3.90h-1.32ZM100.32 3.40h1.32V3.90h-1.32ZM101.64 4.30h1.32V3.90h-1.32ZM102.96 2.50h1.32V3.90h-1.32ZM104.28 2.50h1.32V3.90h-1.32ZM105.60 2.80h1.32V3.90h-1.32ZM106.92 2.50h1.32V3.90h-1.32ZM108.24 2.50h1.32V3.90h-1.32ZM109.56 4.10h1.32V3.90h-1.32ZM110.88 2.50h1.32V3.90h-1.32ZM112.20 2.50h1.32V3.90h-1.32ZM113.52 2.80h1.32V3.90h-1.32ZM114.84 2.80h1.32V3.90h-1.32ZM116.16 2.50h1.32V3.90h-1.32ZM117.48 2.50h1.32V3.90h-1.32ZM118.80 3.40h1.32V3.90h-1.32ZM120.12 2.70h1.32V3.90h-1.32ZM121.44 3.40h1.32V3.90h-1.32ZM122.76 4.10h1.32V3.90h-1.32ZM124.08 3.40h1.32V3.90h-1.32ZM125.40 2.50h1.32V3.90h-1.32ZM126.72 2.70h1.32V3.90h-1.32ZM128.04 5.00h1.32V3.90h-1.32ZM129.36 2.50h1.32V3.90h-1.32ZM130.68 2.70h1.32V3.90h-1.32ZM132.00 2.50h1.32V3.90h-1.32ZM133.32 2.50h1.32V3.90h-1.32ZM134.64 2.50h1.32V3.90h-1.32ZM135.96 2.50h1.32V3.90h-1.32ZM137.28 2.50h1.32V3.90h-1.32ZM138.60 3.40h1.32V3.90h-1.32ZM139.92 4.10h1.32V3.90h-1.32ZM141.24 2.70h1.32V3.90h-1.32ZM142.56 4.60h1.32V3.90h-1.32ZM143.88 2.70h1.32V3.90h-1.32ZM145.20 2.80h1.32V3.90h-1.32ZM146.52 2.80h1.32V3.90h-1.32ZM147.84 3.40h1.32V3.90h-1.32ZM149.16 3.00h1.32V3.90h-1.32ZM150.48 3.40h1.32V3.90h-1.32ZM151.80 2.80h1.32V3.90h-1.32ZM153.12 5.00h1.32V3.90h-1.32ZM154.44 2.80h1.32V3.90h-1.32ZM155.76 3.00h0.74V3.90h-0.74Z" fill="#ffadad"/><path d="M0.00 27.10h1.32V27.70h-1.32ZM1.32 27.40h1.32V27.70h-1.32ZM2.64 26.80h1.32V27.70h-1.32ZM3.96 27.10h1.32V27.70h-1.32ZM5.28 27.10h1.32V27.70h-1.32ZM6.60 27.10h1.32V27.70h-1.32ZM7.92 27.10h1.32V27.70h-1.32ZM9.24 27.60h1.32V27.70h-1.32ZM10.56 27.40h1.32V27.70h-1.32ZM11.88 26.80h1.32V27.70h-1.32ZM13.20 26.80h1.32V27.70h-1.32ZM14.52 27.30h1.32V27.70h-1.32ZM15.84 27.30h1.32V27.70h-1.32ZM17.16 27.10h1.32V27.70h-1.32ZM18.48 27.40h1.32V27.70h-1.32ZM19.80 27.40h1.32V27.70h-1.32ZM21.12 27.30h1.32V27.70h-1.32ZM22.44 27.10h1.32V27.70h-1.32ZM23.76 27.60h1.32V27.70h-1.32ZM25.08 26.80h1.32V27.70h-1.32ZM26.40 26.80h1.32V27.70h-1.32ZM27.72 27.10h1.32V27.70h-1.32ZM29.04 27.10h1.32V27.70h-1.32ZM30.36 27.60h1.32V27.70h-1.32ZM31.68 27.30h1.32V27.70h-1.32ZM33.00 27.30h1.32V27.70h-1.32ZM34.32 27.30h1.32V27.70h-1.32ZM35.64 27.30h1.32V27.70h-1.32ZM36.96 27.60h1.32V27.70h-1.32ZM38.28 26.80h1.32V27.70h-1.32ZM39.60 27.30h1.32V27.70h-1.32ZM40.92 27.10h1.32V27.70h-1.32ZM42.24 27.10h1.32V27.70h-1.32ZM43.56 27.60h1.32V27.70h-1.32ZM44.88 27.10h1.32V27.70h-1.32ZM46.20 27.30h1.32V27.70h-1.32ZM47.52 26.80h1.32V27.70h-1.32ZM48.84 27.40h1.32V27.70h-1.32ZM50.16 27.40h1.32V27.70h-1.32ZM51.48 27.10h1.32V27.70h-1.32ZM52.80 27.30h1.32V27.70h-1.32ZM54.12 27.10h1.32V27.70h-1.32ZM55.44 26.80h1.32V27.70h-1.32ZM56.76 26.80h1.32V27.70h-1.32ZM58.08 27.30h1.32V27.70h-1.32ZM59.40 27.10h1.32V27.70h-1.32ZM60.72 26.80h1.32V27.70h-1.32ZM62.04 27.40h1.32V27.70h-1.32ZM63.36 27.60h1.32V27.70h-1.32ZM64.68 27.60h1.32V27.70h-1.32ZM66.00 27.10h1.32V27.70h-1.32ZM67.32 27.40h1.32V27.70h-1.32ZM68.64 27.60h1.32V27.70h-1.32ZM69.96 27.10h1.32V27.70h-1.32ZM71.28 26.80h1.32V27.70h-1.32ZM72.60 27.10h1.32V27.70h-1.32ZM73.92 27.10h1.32V27.70h-1.32ZM75.24 27.60h1.32V27.70h-1.32ZM76.56 27.10h1.32V27.70h-1.32ZM77.88 27.10h1.32V27.70h-1.32ZM79.20 27.10h1.32V27.70h-1.32ZM80.52 27.10h1.32V27.70h-1.32ZM81.84 27.30h1.32V27.70h-1.32ZM83.16 27.60h1.32V27.70h-1.32ZM84.48 27.10h1.32V27.70h-1.32ZM85.80 27.10h1.32V27.70h-1.32ZM87.12 27.30h1.32V27.70h-1.32ZM88.44 27.60h1.32V27.70h-1.32ZM89.76 26.80h1.32V27.70h-1.32ZM91.08 27.10h1.32V27.70h-1.32ZM92.40 27.10h1.32V27.70h-1.32ZM93.72 26.80h1.32V27.70h-1.32ZM95.04 27.10h1.32V27.70h-1.32ZM96.36 27.10h1.32V27.70h-1.32ZM97.68 26.80h1.32V27.70h-1.32ZM99.00 26.80h1.32V27.70h-1.32ZM100.32 27.60h1.32V27.70h-1.32ZM101.64 27.60h1.32V27.70h-1.32ZM102.96 27.60h1.32V27.70h-1.32ZM104.28 27.40h1.32V27.70h-1.32ZM105.60 26.80h1.32V27.70h-1.32ZM106.92 27.10h1.32V27.70h-1.32ZM108.24 26.80h1.32V27.70h-1.32ZM109.56 26.80h1.32V27.70h-1.32ZM110.88 27.10h1.32V27.70h-1.32ZM112.20 27.40h1.32V27.70h-1.32ZM113.52 27.40h1.32V27.70h-1.32ZM114.84 27.10h1.32V27.70h-1.32ZM116.16 27.10h1.32V27.70h-1.32ZM117.48 27.40h1.32V27.70h-1.32ZM118.80 27.60h1.32V27.70h-1.32ZM120.12 27.60h1.32V27.70h-1.32ZM121.44 27.40h1.32V27.70h-1.32ZM122.76 27.10h1.32V27.70h-1.32ZM124.08 27.10h1.32V27.70h-1.32ZM125.40 27.10h1.32V27.70h-1.32ZM126.72 27.10h1.32V27.70h-1.32ZM128.04 27.10h1.32V27.70h-1.32ZM129.36 27.10h1.32V27.70h-1.32ZM130.68 27.40h1.32V27.70h-1.32ZM132.00 27.30h1.32V27.70h-1.32ZM133.32 27.10h1.32V27.70h-1.32ZM134.64 27.30h1.32V27.70h-1.32ZM135.96 27.30h1.32V27.70h-1.32ZM137.28 26.80h1.32V27.70h-1.32ZM138.60 26.80h1.32V27.70h-1.32ZM139.92 27.30h1.32V27.70h-1.32ZM141.24 27.40h1.32V27.70h-1.32ZM142.56 26.80h1.32V27.70h-1.32ZM143.88 27.10h1.32V27.70h-1.32ZM145.20 27.60h1.32V27.70h-1.32ZM146.52 27.30h1.32V27.70h-1.32ZM147.84 27.10h1.32V27.70h-1.32ZM149.16 27.30h1.32V27.70h-1.32ZM150.48 27.10h1.32V27.70h-1.32ZM151.80 27.10h1.32V27.70h-1.32ZM153.12 27.40h1.32V27.70h-1.32ZM154.44 27.30h1.32V27.70h-1.32ZM155.76 27.30h0.74V27.70h-0.74Z" fill="#b663b9"/><path d="M1.32 3.30h.7V27.40h-.7ZM3.96 4.00h.7V27.10h-.7ZM5.28 3.10h.7V27.10h-.7ZM9.24 3.10h.7V27.60h-.7ZM13.20 3.60h.7V26.80h-.7ZM26.40 4.70h.7V26.80h-.7ZM29.04 3.10h.7V27.10h-.7ZM31.68 3.40h.7V27.30h-.7ZM33.00 3.30h.7V27.30h-.7ZM35.64 4.00h.7V27.30h-.7ZM38.28 3.10h.7V26.80h-.7ZM55.44 3.10h.7V26.80h-.7ZM66.00 3.10h.7V27.10h-.7ZM72.60 3.10h.7V27.10h-.7ZM77.88 4.00h.7V27.10h-.7ZM99.00 3.30h.7V26.80h-.7ZM130.68 3.30h.7V27.40h-.7ZM143.88 3.30h.7V27.10h-.7ZM147.84 4.00h.7V27.10h-.7ZM155.76 3.60h.7V27.30h-.7Z" fill="#ffd2d2"/><path d="M1.32 27.70h.7V58.5h-.7ZM3.96 27.40h.7V58.5h-.7ZM5.28 27.40h.7V58.5h-.7ZM9.24 27.90h.7V58.5h-.7ZM13.20 27.10h.7V58.5h-.7ZM26.40 27.10h.7V58.5h-.7ZM29.04 27.40h.7V58.5h-.7ZM31.68 27.60h.7V58.5h-.7ZM33.00 27.60h.7V58.5h-.7ZM35.64 27.60h.7V58.5h-.7ZM38.28 27.10h.7V58.5h-.7ZM55.44 27.10h.7V58.5h-.7ZM66.00 27.40h.7V58.5h-.7ZM72.60 27.40h.7V58.5h-.7ZM77.88 27.40h.7V58.5h-.7ZM99.00 27.10h.7V58.5h-.7ZM130.68 27.70h.7V58.5h-.7ZM143.88 27.40h.7V58.5h-.7ZM147.84 27.40h.7V58.5h-.7ZM155.76 27.60h.7V58.5h-.7Z" fill="#a078dc"/><path d="M2.64 3.10h.6V26.80h-.6ZM7.92 3.10h.6V27.10h-.6ZM11.88 3.30h.6V26.80h-.6ZM19.80 3.30h.6V27.40h-.6ZM21.12 3.40h.6V27.30h-.6ZM22.44 3.10h.6V27.10h-.6ZM27.72 3.10h.6V27.10h-.6ZM43.56 3.30h.6V27.60h-.6ZM47.52 4.00h.6V26.80h-.6ZM48.84 4.70h.6V27.40h-.6ZM52.80 3.30h.6V27.30h-.6ZM60.72 3.10h.6V26.80h-.6ZM62.04 3.10h.6V27.40h-.6ZM63.36 3.10h.6V27.60h-.6ZM67.32 4.00h.6V27.40h-.6ZM68.64 3.10h.6V27.60h-.6ZM73.92 4.00h.6V27.10h-.6ZM75.24 3.10h.6V27.60h-.6ZM79.20 3.10h.6V27.10h-.6ZM84.48 3.10h.6V27.10h-.6ZM87.12 3.10h.6V27.30h-.6ZM96.36 3.30h.6V27.10h-.6ZM101.64 4.90h.6V27.60h-.6ZM102.96 3.10h.6V27.60h-.6ZM108.24 3.10h.6V26.80h-.6ZM109.56 4.70h.6V26.80h-.6ZM110.88 3.10h.6V27.10h-.6ZM114.84 3.40h.6V27.10h-.6ZM116.16 3.10h.6V27.10h-.6ZM121.44 4.00h.6V27.40h-.6ZM122.76 4.70h.6V27.10h-.6ZM132.00 3.10h.6V27.30h-.6ZM135.96 3.10h.6V27.30h-.6ZM137.28 3.10h.6V26.80h-.6ZM153.12 5.60h.6V27.40h-.6Z" fill="#ff8282"/><path d="M2.64 27.10h.7V58.5h-.7ZM7.92 27.40h.7V58.5h-.7ZM11.88 27.10h.7V58.5h-.7ZM19.80 27.70h.7V58.5h-.7ZM21.12 27.60h.7V58.5h-.7ZM22.44 27.40h.7V58.5h-.7ZM27.72 27.40h.7V58.5h-.7ZM43.56 27.90h.7V58.5h-.7ZM47.52 27.10h.7V58.5h-.7ZM48.84 27.70h.7V58.5h-.7ZM52.80 27.60h.7V58.5h-.7ZM60.72 27.10h.7V58.5h-.7ZM62.04 27.70h.7V58.5h-.7ZM63.36 27.90h.7V58.5h-.7ZM67.32 27.70h.7V58.5h-.7ZM68.64 27.90h.7V58.5h-.7ZM73.92 27.40h.7V58.5h-.7ZM75.24 27.90h.7V58.5h-.7ZM79.20 27.40h.7V58.5h-.7ZM84.48 27.40h.7V58.5h-.7ZM87.12 27.60h.7V58.5h-.7ZM96.36 27.40h.7V58.5h-.7ZM101.64 27.90h.7V58.5h-.7ZM102.96 27.90h.7V58.5h-.7ZM108.24 27.10h.7V58.5h-.7ZM109.56 27.10h.7V58.5h-.7ZM110.88 27.40h.7V58.5h-.7ZM114.84 27.40h.7V58.5h-.7ZM116.16 27.40h.7V58.5h-.7ZM121.44 27.70h.7V58.5h-.7ZM122.76 27.40h.7V58.5h-.7ZM132.00 27.60h.7V58.5h-.7ZM135.96 27.60h.7V58.5h-.7ZM137.28 27.10h.7V58.5h-.7ZM153.12 27.70h.7V58.5h-.7Z" fill="#8636b0"/><path d="M6.60 27.40h.6V58.5h-.6ZM10.56 27.70h.6V58.5h-.6ZM14.52 27.60h.6V58.5h-.6ZM15.84 27.60h.6V58.5h-.6ZM17.16 27.40h.6V58.5h-.6ZM18.48 27.70h.6V58.5h-.6ZM25.08 27.10h.6V58.5h-.6ZM30.36 27.90h.6V58.5h-.6ZM36.96 27.90h.6V58.5h-.6ZM42.24 27.40h.6V58.5h-.6ZM50.16 27.70h.6V58.5h-.6ZM58.08 27.60h.6V58.5h-.6ZM59.40 27.40h.6V58.5h-.6ZM71.28 27.10h.6V58.5h-.6ZM76.56 27.40h.6V58.5h-.6ZM80.52 27.40h.6V58.5h-.6ZM83.16 27.90h.6V58.5h-.6ZM91.08 27.40h.6V58.5h-.6ZM92.40 27.40h.6V58.5h-.6ZM97.68 27.10h.6V58.5h-.6ZM104.28 27.70h.6V58.5h-.6ZM105.60 27.10h.6V58.5h-.6ZM118.80 27.90h.6V58.5h-.6ZM124.08 27.40h.6V58.5h-.6ZM126.72 27.40h.6V58.5h-.6ZM134.64 27.60h.6V58.5h-.6ZM142.56 27.10h.6V58.5h-.6ZM145.20 27.90h.6V58.5h-.6ZM149.16 27.60h.6V58.5h-.6ZM151.80 27.40h.6V58.5h-.6Z" fill="#8e3cb4"/><path d="M7.50 0V58.5M15.40 0V58.5M23.30 0V58.5M31.20 0V58.5M39.10 0V58.5M47.00 0V58.5M54.90 0V58.5M62.80 0V58.5M70.70 0V58.5M78.60 0V58.5M86.50 0V58.5M94.40 0V58.5M102.30 0V58.5M110.20 0V58.5M118.10 0V58.5M126.00 0V58.5M133.90 0V58.5M141.80 0V58.5M149.70 0V58.5" stroke="#fff" stroke-opacity=".32" stroke-width=".7" fill="none"/><path d="M0 51.00H156.5M0 43.00H156.5M0 35.00H156.5M0 27.00H156.5M0 19.00H156.5M0 11.00H156.5M0 3.00H156.5" stroke="#fff" stroke-opacity=".2" stroke-width=".6" fill="none"/></svg>
<div style="left:382.5px;top:249.8px;width:70px;height:18.8px;background:#fff;box-shadow:inset 0 0 0 .7px #555,1px 1px 0 rgba(0,0,0,.35)"></div>
<div style="left:384.20px;top:251.90px;width:6.80px;height:6.00px;background:#0000fe;box-shadow:inset 0 0 0 .5px #222"></div>
<div style="left:384.20px;top:260.10px;width:6.80px;height:6.00px;background:#fe0000;box-shadow:inset 0 0 0 .5px #222"></div>
<div class="d" style="left:392.50px;top:251px;transform:matrix(1,.0005,0,1,0,0.22);font-size:6px;line-height:7.8px;color:#1a1a1a;letter-spacing:-0.101px;">Tx Packet:  16 900 p/s</div>
<div class="d" style="left:392.30px;top:259px;transform:matrix(1,.0005,0,1,0,0.42);font-size:6px;line-height:7.8px;color:#1a1a1a;letter-spacing:-0.031px;">Rx Packet:  29 838 p/s</div>
<div style="left:376.00px;top:278.00px;width:60.50px;height:10.20px;background:#d6d3cd;box-shadow:inset .8px .8px 0 #7d7b76,inset -.8px -.8px 0 #f4f3f0"></div>
<div class="d" style="left:377.80px;top:279px;transform:matrix(1,.0005,0,1,0,0.62);font-size:6px;line-height:7.8px;color:#1a1a1a;">enabled</div>
<div style="left:437.50px;top:278.00px;width:60.00px;height:10.20px;background:#d6d3cd;box-shadow:inset .8px .8px 0 #7d7b76,inset -.8px -.8px 0 #f4f3f0"></div>
<div class="d" style="left:439.30px;top:279px;transform:matrix(1,.0005,0,1,0,0.62);font-size:6px;line-height:7.8px;color:#1a1a1a;">running</div>
<div style="left:498.50px;top:278.00px;width:48.50px;height:10.20px;background:#d6d3cd;box-shadow:inset .8px .8px 0 #7d7b76,inset -.8px -.8px 0 #f4f3f0"></div>
<div class="d" style="left:500.50px;top:279px;transform:matrix(1,.0005,0,1,0,0.62);font-size:6px;line-height:7.8px;color:#bdbab4;">slave</div>
<div style="left:549.50px;top:3.00px;width:176.50px;height:11.20px;background:linear-gradient(#a19f9a,#b8b5af);"></div>
<div class="d" style="left:552.50px;top:5px;transform:matrix(1,.0005,0,1,0,0.75);font-size:6.2px;line-height:8.06px;color:#f4f4f2;">Bandwidth Test (Running)</div>
<div style="left:711.5px;top:5.4px;width:7px;height:6.8px;background:#d9d6d0;box-shadow:inset .7px .7px 0 #fff,inset -.7px -.7px 0 #555"></div>
<div style="left:720.5px;top:5.4px;width:7px;height:6.8px;background:#d9d6d0;box-shadow:inset .7px .7px 0 #fff,inset -.7px -.7px 0 #555"></div>
<svg style="left:711.5px;top:5.4px" width="7" height="7" viewBox="0 0 7 7"><rect x="1.6" y="1.6" width="3.6" height="3.4" fill="none" stroke="#222" stroke-width=".7"/><path d="M1.6 2 H5.2" stroke="#222" stroke-width="1"/></svg>
<svg style="left:720.5px;top:5.4px" width="7" height="7" viewBox="0 0 7 7"><path d="M1.8 1.8 L5 5 M5 1.8 L1.8 5" stroke="#111" stroke-width="1"/></svg>
<div class="d" style="left:598.77px;top:19px;transform:matrix(1,.0005,0,1,0,0.62);font-size:6px;line-height:7.8px;color:#1a1a1a;">Test To</div>
<div style="left:619.00px;top:18.60px;width:66.60px;height:9.20px;background:#fff;box-shadow:inset .8px .8px 0 #7d7b76,inset -.8px -.8px 0 #f4f3f0"></div>
<div class="d" style="left:621.20px;top:19px;transform:matrix(1,.0005,0,1,0,0.62);font-size:6px;line-height:7.8px;color:#1a1a1a;">10.10.5.100</div>
<div class="d" style="left:593.05px;top:32px;transform:matrix(1,.0005,0,1,0,0.82);font-size:6px;line-height:7.8px;color:#1a1a1a;">Protocol:</div>
<div style="left:619.9px;top:33.7px;width:5.8px;height:5.8px;border-radius:50%;background:#fff;box-shadow:inset .8px .8px 0 #555,.6px .6px 0 #fff"></div>
<div style="left:644.3000000000001px;top:33.7px;width:5.8px;height:5.8px;border-radius:50%;background:#fff;box-shadow:inset .8px .8px 0 #555,.6px .6px 0 #fff"></div>
<div style="left:646.1px;top:35.5px;width:2.2px;height:2.2px;border-radius:50%;background:#000"></div>
<div class="d" style="left:628.00px;top:33px;transform:matrix(1,.0005,0,1,0,0.02);font-size:6px;line-height:7.8px;color:#1a1a1a;">udp</div>
<div class="d" style="left:652.50px;top:33px;transform:matrix(1,.0005,0,1,0,0.02);font-size:6px;line-height:7.8px;color:#1a1a1a;">tcp</div>
<div class="d" style="left:568.54px;top:46px;transform:matrix(1,.0005,0,1,0,0.22);font-size:6px;line-height:7.8px;color:#8d8b86;">Local UDP Tx Size</div>
<div style="left:619.00px;top:45.50px;width:57.20px;height:9.00px;background:#d6d3cd;box-shadow:inset .8px .8px 0 #7d7b76,inset -.8px -.8px 0 #f4f3f0"></div>
<div class="d" style="left:561.71px;top:59px;transform:matrix(1,.0005,0,1,0,0.82);font-size:6px;line-height:7.8px;color:#8d8b86;">Remote UDP Tx Size</div>
<div style="left:619.00px;top:59.00px;width:57.20px;height:9.00px;background:#d6d3cd;box-shadow:inset .8px .8px 0 #7d7b76,inset -.8px -.8px 0 #f4f3f0"></div>
<svg style="left:679.5px;top:49.2px" width="5" height="3" viewBox="0 0 5 3"><path d="M0 0 H5 L2.5 3 Z" fill="#8d8b86"/></svg>
<svg style="left:679.5px;top:62.7px" width="5" height="3" viewBox="0 0 5 3"><path d="M0 0 H5 L2.5 3 Z" fill="#8d8b86"/></svg>
<div class="d" style="left:592.23px;top:73px;transform:matrix(1,.0005,0,1,0,0.02);font-size:6px;line-height:7.8px;color:#1a1a1a;">Direction</div>
<div style="left:619.00px;top:72.20px;width:57.20px;height:9.20px;background:#fff;box-shadow:inset .8px .8px 0 #7d7b76,inset -.8px -.8px 0 #f4f3f0"></div>
<div class="d" style="left:621.20px;top:73px;transform:matrix(1,.0005,0,1,0,0.22);font-size:6px;line-height:7.8px;color:#1a1a1a;">send</div>
<div style="left:677.80px;top:72.40px;width:7.80px;height:8.80px;background:#dcd9d3;box-shadow:inset .8px .8px 0 #fbfaf8,inset -.8px -.8px 0 #86847f"></div>
<svg style="left:679.3px;top:74.2px" width="5" height="5.4" viewBox="0 0 5 5.4"><path d="M0 0 H5 L2.5 2.6 Z M0 2.6 H5 L2.5 5.2 Z" fill="#111"/></svg>
<div style="left:553.50px;top:86.60px;width:132.00px;height:0.60px;background:#c3c0ba;"></div>
<div style="left:553.50px;top:87.20px;width:132.00px;height:0.60px;background:#ebe9e5;"></div>
<div class="d" style="left:558.74px;top:91px;transform:matrix(1,.0005,0,1,0,0.62);font-size:6px;line-height:7.8px;color:#1a1a1a;">TCP Connection Coun</div>
<div style="left:619.00px;top:90.80px;width:66.60px;height:9.20px;background:#fff;box-shadow:inset .8px .8px 0 #7d7b76,inset -.8px -.8px 0 #f4f3f0"></div>
<div class="d" style="left:621.20px;top:91px;transform:matrix(1,.0005,0,1,0,0.82);font-size:6px;line-height:7.8px;color:#1a1a1a;">20</div>
<div class="d" style="left:576.23px;top:105px;transform:matrix(1,.0005,0,1,0,0.02);font-size:6px;line-height:7.8px;color:#1a1a1a;">Local Tx Speec</div>
<div style="left:619.00px;top:104.20px;width:44.30px;height:9.20px;background:#fff;box-shadow:inset .8px .8px 0 #7d7b76,inset -.8px -.8px 0 #f4f3f0"></div>
<div class="d" style="left:621.20px;top:105px;transform:matrix(1,.0005,0,1,0,0.22);font-size:6px;line-height:7.8px;color:#1a1a1a;">30M</div>
<svg style="left:666.5px;top:106.8px" width="5.4" height="3.4" viewBox="0 0 5.4 3.4"><path d="M0 3.4 H5.4 L2.7 0 Z" fill="#111"/></svg>
<div class="d" style="left:676.00px;top:105px;transform:matrix(1,.0005,0,1,0,0.22);font-size:6px;line-height:7.8px;color:#1a1a1a;">bps</div>
<div class="d" style="left:569.41px;top:118px;transform:matrix(1,.0005,0,1,0,0.62);font-size:6px;line-height:7.8px;color:#1a1a1a;">Remote Tx Speec</div>
<div style="left:619.00px;top:117.70px;width:44.30px;height:9.00px;background:#d6d3cd;box-shadow:inset .8px .8px 0 #7d7b76,inset -.8px -.8px 0 #f4f3f0"></div>
<svg style="left:666.5px;top:120.4px" width="5.4" height="3.4" viewBox="0 0 5.4 3.4"><path d="M0 0 H5.4 L2.7 3.4 Z" fill="#111"/></svg>
<div class="d" style="left:676.00px;top:118px;transform:matrix(1,.0005,0,1,0,0.82);font-size:6px;line-height:7.8px;color:#1a1a1a;">bps</div>
<div style="left:619.00px;top:131.30px;width:6.00px;height:5.80px;background:#fff;box-shadow:inset .8px .8px 0 #7d7b76,inset -.8px -.8px 0 #f4f3f0"></div>
<div class="d" style="left:628.00px;top:130px;transform:matrix(1,.0005,0,1,0,0.62);font-size:6px;line-height:7.8px;color:#1a1a1a;">Random Data</div>
<div style="left:553.50px;top:142.80px;width:132.00px;height:0.60px;background:#c3c0ba;"></div>
<div style="left:553.50px;top:143.40px;width:132.00px;height:0.60px;background:#ebe9e5;"></div>
<div class="d" style="left:602.57px;top:147px;transform:matrix(1,.0005,0,1,0,0.82);font-size:6px;line-height:7.8px;color:#1a1a1a;">User:</div>
<div style="left:619.00px;top:147.20px;width:57.20px;height:8.80px;background:#fff;box-shadow:inset .8px .8px 0 #7d7b76,inset -.8px -.8px 0 #f4f3f0"></div>
<div class="d" style="left:621.20px;top:148px;transform:matrix(1,.0005,0,1,0,0.02);font-size:6px;line-height:7.8px;color:#1a1a1a;">admin01</div>
<div class="d" style="left:589.60px;top:161px;transform:matrix(1,.0005,0,1,0,0.22);font-size:6px;line-height:7.8px;color:#1a1a1a;">Password:</div>
<div style="left:619.00px;top:160.50px;width:57.20px;height:8.80px;background:#fff;box-shadow:inset .8px .8px 0 #7d7b76,inset -.8px -.8px 0 #f4f3f0"></div>
<div class="d" style="left:621.30px;top:162px;transform:matrix(1,.0005,0,1,0,0.06);font-size:7.4px;line-height:9.62px;color:#1a1a1a;letter-spacing:0.301px;">************</div>
<svg style="left:679.8px;top:149.8px" width="5" height="3.2" viewBox="0 0 5 3.2"><path d="M0 3.2 H5 L2.5 0 Z" fill="#111"/></svg>
<svg style="left:679.8px;top:163.2px" width="5" height="3.2" viewBox="0 0 5 3.2"><path d="M0 3.2 H5 L2.5 0 Z" fill="#111"/></svg>
<div style="left:553.50px;top:173.80px;width:132.00px;height:0.60px;background:#c3c0ba;"></div>
<div style="left:553.50px;top:174.40px;width:132.00px;height:0.60px;background:#ebe9e5;"></div>
<div class="d" style="left:583.32px;top:179px;transform:matrix(1,.0005,0,1,0,0.82);font-size:6px;line-height:7.8px;color:#1a1a1a;">Lost Packets</div>
<div style="left:619.00px;top:179.00px;width:66.60px;height:8.80px;background:#d6d3cd;box-shadow:inset .8px .8px 0 #7d7b76,inset -.8px -.8px 0 #f4f3f0"></div>
<div class="d" style="left:621.20px;top:179px;transform:matrix(1,.0005,0,1,0,0.82);font-size:6px;line-height:7.8px;color:#1a1a1a;">0</div>
<div class="d" style="left:577.55px;top:193px;transform:matrix(1,.0005,0,1,0,0.22);font-size:6px;line-height:7.8px;color:#1a1a1a;">Tx/Rx Current:</div>
<div style="left:619.00px;top:192.40px;width:66.60px;height:8.80px;background:#d6d3cd;box-shadow:inset .8px .8px 0 #7d7b76,inset -.8px -.8px 0 #f4f3f0"></div>
<div class="d" style="left:621.20px;top:193px;transform:matrix(1,.0005,0,1,0,0.22);font-size:6px;line-height:7.8px;color:#1a1a1a;">29.8 Mbps/0 bps</div>
<div class="d" style="left:564.29px;top:206px;transform:matrix(1,.0005,0,1,0,0.32);font-size:6px;line-height:7.8px;color:#1a1a1a;">Tx/Rx 10s Average:</div>
<div style="left:619.00px;top:205.50px;width:66.60px;height:8.80px;background:#d6d3cd;box-shadow:inset .8px .8px 0 #7d7b76,inset -.8px -.8px 0 #f4f3f0"></div>
<div class="d" style="left:621.20px;top:206px;transform:matrix(1,.0005,0,1,0,0.32);font-size:6px;line-height:7.8px;color:#1a1a1a;">29.9 Mbps/0 bps</div>
<div class="d" style="left:563.29px;top:219px;transform:matrix(1,.0005,0,1,0,0.32);font-size:6px;line-height:7.8px;color:#1a1a1a;">Tx/Rx Total Average</div>
<div style="left:619.00px;top:218.50px;width:66.60px;height:8.80px;background:#d6d3cd;box-shadow:inset .8px .8px 0 #7d7b76,inset -.8px -.8px 0 #f4f3f0"></div>
<div class="d" style="left:621.20px;top:219px;transform:matrix(1,.0005,0,1,0,0.32);font-size:6px;line-height:7.8px;color:#1a1a1a;">29.9 Mbps/0 bps</div>
<div style="left:553.2px;top:231.4px;width:132.8px;height:43px;background:#fff;box-shadow:inset .9px .9px 0 #6e6c68,inset -.9px -.9px 0 #f6f5f2"></div>
<svg style="left:554.2px;top:232.4px" width="130.8" height="41" viewBox="0 0 130.8 41"><rect x="0" y="19.6" width="130.8" height="21.4" fill="#a6a6fa"/><path d="M7.80 20h.7V41h-.7ZM14.30 20h.7V41h-.7ZM16.90 20h.7V41h-.7ZM20.80 20h.7V41h-.7ZM22.10 20h.7V41h-.7ZM23.40 20h.7V41h-.7ZM27.30 20h.7V41h-.7ZM29.90 20h.7V41h-.7ZM32.50 20h.7V41h-.7ZM33.80 20h.7V41h-.7ZM36.40 20h.7V41h-.7ZM37.70 20h.7V41h-.7ZM41.60 20h.7V41h-.7ZM46.80 20h.7V41h-.7ZM53.30 20h.7V41h-.7ZM55.90 20h.7V41h-.7ZM57.20 20h.7V41h-.7ZM58.50 20h.7V41h-.7ZM62.40 20h.7V41h-.7ZM74.10 20h.7V41h-.7ZM76.70 20h.7V41h-.7ZM80.60 20h.7V41h-.7ZM85.80 20h.7V41h-.7ZM87.10 20h.7V41h-.7ZM88.40 20h.7V41h-.7ZM91.00 20h.7V41h-.7ZM101.40 20h.7V41h-.7ZM106.60 20h.7V41h-.7ZM109.20 20h.7V41h-.7ZM120.90 20h.7V41h-.7ZM122.20 20h.7V41h-.7ZM123.50 20h.7V41h-.7ZM127.40 20h.7V41h-.7ZM128.70 20h.7V41h-.7Z" fill="#6c6cf2"/><path d="M9.10 20h.6V41h-.6ZM15.60 20h.6V41h-.6ZM54.60 20h.6V41h-.6ZM59.80 20h.6V41h-.6ZM65.00 20h.6V41h-.6ZM66.30 20h.6V41h-.6ZM68.90 20h.6V41h-.6ZM70.20 20h.6V41h-.6ZM71.50 20h.6V41h-.6ZM83.20 20h.6V41h-.6ZM96.20 20h.6V41h-.6ZM97.50 20h.6V41h-.6ZM110.50 20h.6V41h-.6ZM114.40 20h.6V41h-.6ZM118.30 20h.6V41h-.6ZM119.60 20h.6V41h-.6Z" fill="#dcdcff"/><path d="M0 19.5 H130.8" stroke="#5a5ae6" stroke-width=".7" stroke-dasharray="1 1" fill="none"/><path d="M7.60 0 V19.2M15.50 0 V19.2M23.40 0 V19.2M31.30 0 V19.2M39.20 0 V19.2M47.10 0 V19.2M55.00 0 V19.2M62.90 0 V19.2M70.80 0 V19.2M78.70 0 V19.2M86.60 0 V19.2M94.50 0 V19.2M102.40 0 V19.2M110.30 0 V19.2M118.20 0 V19.2M126.10 0 V19.2" stroke="#cbcbcb" stroke-width=".7" fill="none"/><path d="M7.60 19.8 V41M15.50 19.8 V41M23.40 19.8 V41M31.30 19.8 V41M39.20 19.8 V41M47.10 19.8 V41M55.00 19.8 V41M62.90 19.8 V41M70.80 19.8 V41M78.70 19.8 V41M86.60 19.8 V41M94.50 19.8 V41M102.40 19.8 V41M110.30 19.8 V41M118.20 19.8 V41M126.10 19.8 V41" stroke="#fff" stroke-opacity=".55" stroke-width=".7" fill="none"/><path d="M0 2.20 H130.8M0 10.20 H130.8" stroke="#cbcbcb" stroke-width=".7" fill="none"/></svg>
<div style="left:555px;top:253.2px;width:55px;height:18.8px;background:#fff;box-shadow:inset 0 0 0 .7px #555,1px 1px 0 rgba(0,0,0,.35)"></div>
<div style="left:556.80px;top:255.30px;width:6.80px;height:6.00px;background:#0000fe;box-shadow:inset 0 0 0 .5px #222"></div>
<div style="left:556.80px;top:263.50px;width:6.80px;height:6.00px;background:#fe0000;box-shadow:inset 0 0 0 .5px #222"></div>
<div class="d" style="left:565.00px;top:254px;transform:matrix(1,.0005,0,1,0,0.62);font-size:6px;line-height:7.8px;color:#1a1a1a;letter-spacing:-0.164px;">Tx:  29.8 Mbps</div>
<div class="d" style="left:565.00px;top:262px;transform:matrix(1,.0005,0,1,0,0.82);font-size:6px;line-height:7.8px;color:#1a1a1a;">Rx:</div>
<div style="left:695.20px;top:18.60px;width:30.60px;height:11.00px;background:#dcd9d3;box-shadow:inset .8px .8px 0 #fbfaf8,inset -.8px -.8px 0 #86847f"></div>
<div class="d" style="left:703.91px;top:20px;transform:matrix(1,.0005,0,1,0,0.52);font-size:6px;line-height:7.8px;color:#1a1a1a;">Start</div>
<div style="left:695.20px;top:32.20px;width:30.60px;height:11.40px;background:#dcd9d3;box-shadow:inset 0 0 0 .8px #333,inset 1.6px 1.6px 0 #fbfaf8,inset -1.6px -1.6px 0 #86847f"></div>
<div class="d" style="left:704.36px;top:34px;transform:matrix(1,.0005,0,1,0,0.32);font-size:6px;line-height:7.8px;color:#1a1a1a;">Stop</div>
<div style="left:695.20px;top:46.00px;width:30.60px;height:11.00px;background:#dcd9d3;box-shadow:inset .8px .8px 0 #fbfaf8,inset -.8px -.8px 0 #86847f"></div>
<div class="d" style="left:703.14px;top:47px;transform:matrix(1,.0005,0,1,0,0.92);font-size:6px;line-height:7.8px;color:#1a1a1a;">Close</div>
<div style="left:549.60px;top:277.40px;width:176.40px;height:0.70px;background:#efeeea;"></div>
<div class="d" style="left:552.00px;top:279px;transform:matrix(1,.0005,0,1,0,0.62);font-size:6px;line-height:7.8px;color:#1a1a1a;">running...</div>
<div style="left:375.00px;top:289.60px;width:161.00px;height:10.40px;background:#dedbd6;"></div>
<div style="left:375.00px;top:291.20px;width:161.00px;height:7.00px;background:#cbc8c2;"></div>
<div style="left:375.00px;top:299.40px;width:161.00px;height:0.70px;background:#9c9a95;"></div>
<div style="left:375.5px;top:301.5px;width:160.2px;height:170.3px;background:#fff;overflow:hidden">
</div>
<div style="left:375.50px;top:302.00px;width:160.20px;height:9.50px;background:#d8d5cf;box-shadow:inset 0 -.7px 0 #a5a29c,inset 0 .7px 0 #f3f2ef"></div>
<div style="left:400.20px;top:302.60px;width:0.60px;height:8.40px;background:#b3b0aa;"></div>
<div style="left:400.80px;top:302.60px;width:0.50px;height:8.40px;background:#ebe9e5;"></div>
<div style="left:439.80px;top:302.60px;width:0.60px;height:8.40px;background:#b3b0aa;"></div>
<div style="left:440.40px;top:302.60px;width:0.50px;height:8.40px;background:#ebe9e5;"></div>
<div style="left:463.80px;top:302.60px;width:0.60px;height:8.40px;background:#b3b0aa;"></div>
<div style="left:464.40px;top:302.60px;width:0.50px;height:8.40px;background:#ebe9e5;"></div>
<div style="left:486.20px;top:302.60px;width:0.60px;height:8.40px;background:#b3b0aa;"></div>
<div style="left:486.80px;top:302.60px;width:0.50px;height:8.40px;background:#ebe9e5;"></div>
<div style="left:504.00px;top:302.60px;width:0.60px;height:8.40px;background:#b3b0aa;"></div>
<div style="left:504.60px;top:302.60px;width:0.50px;height:8.40px;background:#ebe9e5;"></div>
<div class="d" style="left:378.50px;top:303px;transform:matrix(1,.0005,0,1,0,0.42);font-size:6px;line-height:7.8px;color:#1a1a1a;">Se...</div>
<div class="d" style="left:402.00px;top:303px;transform:matrix(1,.0005,0,1,0,0.42);font-size:6px;line-height:7.8px;color:#1a1a1a;">Host</div>
<div class="d" style="left:441.60px;top:303px;transform:matrix(1,.0005,0,1,0,0.42);font-size:6px;line-height:7.8px;color:#1a1a1a;">Time</div>
<div class="d" style="left:465.60px;top:303px;transform:matrix(1,.0005,0,1,0,0.42);font-size:6px;line-height:7.8px;color:#1a1a1a;">Repl...</div>
<div class="d" style="left:488.00px;top:303px;transform:matrix(1,.0005,0,1,0,0.42);font-size:6px;line-height:7.8px;color:#1a1a1a;">TTL</div>
<div class="d" style="left:505.80px;top:303px;transform:matrix(1,.0005,0,1,0,0.42);font-size:6px;line-height:7.8px;color:#1a1a1a;">Status</div>
<svg style="left:395.5px;top:305.6px" width="4" height="3.4" viewBox="0 0 4 3.4"><path d="M.3 3.1 L2 .3 L3.7 3.1" fill="none" stroke="#a9a6a0" stroke-width=".6"/></svg>
<div style="left:400.40px;top:311.50px;width:0.60px;height:160.30px;background:#ecebe8;"></div>
<div style="left:440.00px;top:311.50px;width:0.60px;height:160.30px;background:#ecebe8;"></div>
<div style="left:464.00px;top:311.50px;width:0.60px;height:160.30px;background:#ecebe8;"></div>
<div style="left:486.40px;top:311.50px;width:0.60px;height:160.30px;background:#ecebe8;"></div>
<div style="left:504.20px;top:311.50px;width:0.60px;height:160.30px;background:#ecebe8;"></div>
<div style="left:377.40px;top:311.50px;width:0.60px;height:160.30px;background:#ecebe8;"></div>
<div style="left:375.50px;top:319.50px;width:160.20px;height:0.60px;background:#ecebe8;"></div>
<div class="d r" style="top:311px;transform:matrix(1,.0005,0,1,0,0.82);"><span style="left:380px;width:20px;text-align:right">150</span><span style="left:402.4px;letter-spacing:-.2px">10.10.5.100</span><span style="left:441.6px">4ms</span><span style="left:464px;width:20.4px;text-align:right">64</span><span style="left:486px;width:17px;text-align:right">64</span></div>
<div style="left:375.50px;top:327.37px;width:160.20px;height:0.60px;background:#ecebe8;"></div>
<div class="d r" style="top:319px;transform:matrix(1,.0005,0,1,0,0.68);"><span style="left:380px;width:20px;text-align:right">151</span><span style="left:402.4px;letter-spacing:-.2px">10.10.5.100</span><span style="left:441.6px">4ms</span><span style="left:464px;width:20.4px;text-align:right">64</span><span style="left:486px;width:17px;text-align:right">64</span></div>
<div style="left:375.50px;top:335.23px;width:160.20px;height:0.60px;background:#ecebe8;"></div>
<div class="d r" style="top:327px;transform:matrix(1,.0005,0,1,0,0.55);"><span style="left:380px;width:20px;text-align:right">152</span><span style="left:402.4px;letter-spacing:-.2px">10.10.5.100</span><span style="left:441.6px">5ms</span><span style="left:464px;width:20.4px;text-align:right">64</span><span style="left:486px;width:17px;text-align:right">64</span></div>
<div style="left:375.50px;top:343.10px;width:160.20px;height:0.60px;background:#ecebe8;"></div>
<div class="d r" style="top:335px;transform:matrix(1,.0005,0,1,0,0.41);"><span style="left:380px;width:20px;text-align:right">153</span><span style="left:402.4px;letter-spacing:-.2px">10.10.5.100</span><span style="left:441.6px">2ms</span><span style="left:464px;width:20.4px;text-align:right">64</span><span style="left:486px;width:17px;text-align:right">64</span></div>
<div style="left:375.50px;top:350.96px;width:160.20px;height:0.60px;background:#ecebe8;"></div>
<div class="d r" style="top:343px;transform:matrix(1,.0005,0,1,0,0.28);"><span style="left:380px;width:20px;text-align:right">154</span><span style="left:402.4px;letter-spacing:-.2px">10.10.5.100</span><span style="left:441.6px">4ms</span><span style="left:464px;width:20.4px;text-align:right">64</span><span style="left:486px;width:17px;text-align:right">64</span></div>
<div style="left:375.50px;top:358.82px;width:160.20px;height:0.60px;background:#ecebe8;"></div>
<div class="d r" style="top:351px;transform:matrix(1,.0005,0,1,0,0.14);"><span style="left:380px;width:20px;text-align:right">155</span><span style="left:402.4px;letter-spacing:-.2px">10.10.5.100</span><span style="left:441.6px">4ms</span><span style="left:464px;width:20.4px;text-align:right">64</span><span style="left:486px;width:17px;text-align:right">64</span></div>
<div style="left:375.50px;top:366.69px;width:160.20px;height:0.60px;background:#ecebe8;"></div>
<div class="d r" style="top:359px;transform:matrix(1,.0005,0,1,0,0.01);"><span style="left:380px;width:20px;text-align:right">156</span><span style="left:402.4px;letter-spacing:-.2px">10.10.5.100</span><span style="left:441.6px">5ms</span><span style="left:464px;width:20.4px;text-align:right">64</span><span style="left:486px;width:17px;text-align:right">64</span></div>
<div style="left:375.50px;top:374.56px;width:160.20px;height:0.60px;background:#ecebe8;"></div>
<div class="d r" style="top:366px;transform:matrix(1,.0005,0,1,0,0.87);"><span style="left:380px;width:20px;text-align:right">157</span><span style="left:402.4px;letter-spacing:-.2px">10.10.5.100</span><span style="left:441.6px">3ms</span><span style="left:464px;width:20.4px;text-align:right">64</span><span style="left:486px;width:17px;text-align:right">64</span></div>
<div style="left:375.50px;top:382.42px;width:160.20px;height:0.60px;background:#ecebe8;"></div>
<div class="d r" style="top:374px;transform:matrix(1,.0005,0,1,0,0.74);"><span style="left:380px;width:20px;text-align:right">158</span><span style="left:402.4px;letter-spacing:-.2px">10.10.5.100</span><span style="left:441.6px">3ms</span><span style="left:464px;width:20.4px;text-align:right">64</span><span style="left:486px;width:17px;text-align:right">64</span></div>
<div style="left:375.50px;top:390.28px;width:160.20px;height:0.60px;background:#ecebe8;"></div>
<div class="d r" style="top:382px;transform:matrix(1,.0005,0,1,0,0.6);"><span style="left:380px;width:20px;text-align:right">159</span><span style="left:402.4px;letter-spacing:-.2px">10.10.5.100</span><span style="left:441.6px">5ms</span><span style="left:464px;width:20.4px;text-align:right">64</span><span style="left:486px;width:17px;text-align:right">64</span></div>
<div style="left:375.50px;top:398.15px;width:160.20px;height:0.60px;background:#ecebe8;"></div>
<div class="d r" style="top:390px;transform:matrix(1,.0005,0,1,0,0.47);"><span style="left:380px;width:20px;text-align:right">160</span><span style="left:402.4px;letter-spacing:-.2px">10.10.5.100</span><span style="left:441.6px">3ms</span><span style="left:464px;width:20.4px;text-align:right">64</span><span style="left:486px;width:17px;text-align:right">64</span></div>
<div style="left:375.50px;top:406.01px;width:160.20px;height:0.60px;background:#ecebe8;"></div>
<div class="d r" style="top:398px;transform:matrix(1,.0005,0,1,0,0.33);"><span style="left:380px;width:20px;text-align:right">161</span><span style="left:402.4px;letter-spacing:-.2px">10.10.5.100</span><span style="left:441.6px">4ms</span><span style="left:464px;width:20.4px;text-align:right">64</span><span style="left:486px;width:17px;text-align:right">64</span></div>
<div style="left:375.50px;top:413.88px;width:160.20px;height:0.60px;background:#ecebe8;"></div>
<div class="d r" style="top:406px;transform:matrix(1,.0005,0,1,0,0.2);"><span style="left:380px;width:20px;text-align:right">162</span><span style="left:402.4px;letter-spacing:-.2px">10.10.5.100</span><span style="left:441.6px">4ms</span><span style="left:464px;width:20.4px;text-align:right">64</span><span style="left:486px;width:17px;text-align:right">64</span></div>
<div style="left:375.50px;top:421.75px;width:160.20px;height:0.60px;background:#ecebe8;"></div>
<div class="d r" style="top:414px;transform:matrix(1,.0005,0,1,0,0.06);"><span style="left:380px;width:20px;text-align:right">163</span><span style="left:402.4px;letter-spacing:-.2px">10.10.5.100</span><span style="left:441.6px">3ms</span><span style="left:464px;width:20.4px;text-align:right">64</span><span style="left:486px;width:17px;text-align:right">64</span></div>
<div style="left:375.50px;top:429.61px;width:160.20px;height:0.60px;background:#ecebe8;"></div>
<div class="d r" style="top:421px;transform:matrix(1,.0005,0,1,0,0.93);"><span style="left:380px;width:20px;text-align:right">164</span><span style="left:402.4px;letter-spacing:-.2px">10.10.5.100</span><span style="left:441.6px">3ms</span><span style="left:464px;width:20.4px;text-align:right">64</span><span style="left:486px;width:17px;text-align:right">64</span></div>
<div style="left:375.50px;top:437.48px;width:160.20px;height:0.60px;background:#ecebe8;"></div>
<div class="d r" style="top:429px;transform:matrix(1,.0005,0,1,0,0.79);"><span style="left:380px;width:20px;text-align:right">165</span><span style="left:402.4px;letter-spacing:-.2px">10.10.5.100</span><span style="left:441.6px">4ms</span><span style="left:464px;width:20.4px;text-align:right">64</span><span style="left:486px;width:17px;text-align:right">64</span></div>
<div style="left:375.50px;top:445.34px;width:160.20px;height:0.60px;background:#ecebe8;"></div>
<div class="d r" style="top:437px;transform:matrix(1,.0005,0,1,0,0.66);"><span style="left:380px;width:20px;text-align:right">166</span><span style="left:402.4px;letter-spacing:-.2px">10.10.5.100</span><span style="left:441.6px">3ms</span><span style="left:464px;width:20.4px;text-align:right">64</span><span style="left:486px;width:17px;text-align:right">64</span></div>
<div style="left:375.50px;top:453.21px;width:160.20px;height:0.60px;background:#ecebe8;"></div>
<div class="d r" style="top:445px;transform:matrix(1,.0005,0,1,0,0.52);"><span style="left:380px;width:20px;text-align:right">167</span><span style="left:402.4px;letter-spacing:-.2px">10.10.5.100</span><span style="left:441.6px">4ms</span><span style="left:464px;width:20.4px;text-align:right">64</span><span style="left:486px;width:17px;text-align:right">64</span></div>
<div style="left:375.50px;top:461.07px;width:160.20px;height:0.60px;background:#ecebe8;"></div>
<div class="d r" style="top:453px;transform:matrix(1,.0005,0,1,0,0.39);"><span style="left:380px;width:20px;text-align:right">168</span><span style="left:402.4px;letter-spacing:-.2px">10.10.5.100</span><span style="left:441.6px">2ms</span><span style="left:464px;width:20.4px;text-align:right">64</span><span style="left:486px;width:17px;text-align:right">64</span></div>
<div style="left:375.50px;top:468.94px;width:160.20px;height:0.60px;background:#ecebe8;"></div>
<div class="d r" style="top:461px;transform:matrix(1,.0005,0,1,0,0.25);"><span style="left:380px;width:20px;text-align:right">169</span><span style="left:402.4px;letter-spacing:-.2px">10.10.5.100</span><span style="left:441.6px">5ms</span><span style="left:464px;width:20.4px;text-align:right">64</span><span style="left:486px;width:17px;text-align:right">64</span></div>
<div style="left:375.50px;top:476.80px;width:160.20px;height:0.60px;background:#ecebe8;"></div>
<div class="d r" style="top:469px;transform:matrix(1,.0005,0,1,0,0.12);"><span style="left:380px;width:20px;text-align:right">170</span><span style="left:402.4px;letter-spacing:-.2px">10.10.5.100</span><span style="left:441.6px">4ms</span><span style="left:464px;width:20.4px;text-align:right">64</span><span style="left:486px;width:17px;text-align:right">64</span></div>
<div style="left:375.00px;top:471.80px;width:351.00px;height:11.60px;background:#d6d3cd;"></div>
<div style="left:375.50px;top:472.60px;width:25.00px;height:10.20px;background:#d6d3cd;box-shadow:inset .8px .8px 0 #7d7b76,inset -.8px -.8px 0 #f4f3f0"></div>
<div class="d" style="left:377.00px;top:474px;transform:matrix(1,.0005,0,1,0,0.12);font-size:6px;line-height:7.8px;color:#1a1a1a;">171 ite...</div>
<div style="left:402.30px;top:472.60px;width:52.00px;height:10.20px;background:#d6d3cd;box-shadow:inset .8px .8px 0 #7d7b76,inset -.8px -.8px 0 #f4f3f0"></div>
<div class="d" style="left:404.00px;top:474px;transform:matrix(1,.0005,0,1,0,0.12);font-size:6px;line-height:7.8px;color:#1a1a1a;">171 of 171 packe...</div>
<div style="left:455.80px;top:472.60px;width:48.00px;height:10.20px;background:#d6d3cd;box-shadow:inset .8px .8px 0 #7d7b76,inset -.8px -.8px 0 #f4f3f0"></div>
<div class="d" style="left:457.40px;top:474px;transform:matrix(1,.0005,0,1,0,0.12);font-size:6px;line-height:7.8px;color:#1a1a1a;">0% packet loss</div>
<div style="left:505.00px;top:472.60px;width:31.00px;height:10.20px;background:#d6d3cd;box-shadow:inset .8px .8px 0 #7d7b76,inset -.8px -.8px 0 #f4f3f0"></div>
<div class="d" style="left:506.60px;top:474px;transform:matrix(1,.0005,0,1,0,0.12);font-size:6px;line-height:7.8px;color:#1a1a1a;">Min: 0 ms</div>
<div style="left:537.20px;top:472.60px;width:32.00px;height:10.20px;background:#d6d3cd;box-shadow:inset .8px .8px 0 #7d7b76,inset -.8px -.8px 0 #f4f3f0"></div>
<div class="d" style="left:538.80px;top:474px;transform:matrix(1,.0005,0,1,0,0.12);font-size:6px;line-height:7.8px;color:#1a1a1a;">Avg: 3 ms</div>
<div style="left:570.40px;top:472.60px;width:32.00px;height:10.20px;background:#d6d3cd;box-shadow:inset .8px .8px 0 #7d7b76,inset -.8px -.8px 0 #f4f3f0"></div>
<div class="d" style="left:572.00px;top:474px;transform:matrix(1,.0005,0,1,0,0.12);font-size:6px;line-height:7.8px;color:#1a1a1a;">Max: 9 ms</div>
<div style="left:607.40px;top:472.00px;width:119.20px;height:11.40px;background:#7e7e7c;"></div>
<div style="left:371.00px;top:483.20px;width:356.00px;height:1.80px;background:#32322f;"></div>
<div style="left:535.60px;top:289.30px;width:191.00px;height:183.00px;background:#8a8883;"></div>
<div style="left:535.60px;top:289.20px;width:191.00px;height:1.30px;background:#3d3d3b;"></div>
<div style="left:536.40px;top:290.40px;width:189.80px;height:181.20px;background:#d6d3cd;"></div>
<div style="left:537.20px;top:291.20px;width:188.40px;height:10.40px;background:#4f4fcb;"></div>
<div class="d" style="left:540.20px;top:293px;transform:matrix(1,.0005,0,1,0,0.55);font-size:6.2px;line-height:8.06px;color:#f4f4f2;">Interface List</div>
<div style="left:711px;top:293.3px;width:7px;height:6.8px;background:#d9d6d0;box-shadow:inset .7px .7px 0 #fff,inset -.7px -.7px 0 #555"></div>
<div style="left:720px;top:293.3px;width:7px;height:6.8px;background:#d9d6d0;box-shadow:inset .7px .7px 0 #fff,inset -.7px -.7px 0 #555"></div>
<svg style="left:711px;top:293.3px" width="7" height="7" viewBox="0 0 7 7"><rect x="1.6" y="1.6" width="3.6" height="3.4" fill="none" stroke="#222" stroke-width=".7"/><path d="M1.6 2 H5.2" stroke="#222" stroke-width="1"/></svg>
<svg style="left:720px;top:293.3px" width="7" height="7" viewBox="0 0 7 7"><path d="M1.8 1.8 L5 5 M5 1.8 L1.8 5" stroke="#111" stroke-width="1"/></svg>
<div style="left:570px;top:304.4px;width:39.5px;height:9.6px;background:#d0cdc7;box-shadow:inset .7px .7px 0 #efeeea,inset -.7px 0 0 #a9a6a0"></div>
<div class="d" style="left:572.09px;top:305px;transform:matrix(1,.0005,0,1,0,0.82);font-size:6px;line-height:7.8px;color:#1a1a1a;">Interface List</div>
<div style="left:610px;top:304.4px;width:27.5px;height:9.6px;background:#d0cdc7;box-shadow:inset .7px .7px 0 #efeeea,inset -.7px 0 0 #a9a6a0"></div>
<div class="d" style="left:612.12px;top:305px;transform:matrix(1,.0005,0,1,0,0.82);font-size:6px;line-height:7.8px;color:#1a1a1a;">Ethernet</div>
<div style="left:638px;top:304.4px;width:35.5px;height:9.6px;background:#d0cdc7;box-shadow:inset .7px .7px 0 #efeeea,inset -.7px 0 0 #a9a6a0"></div>
<div class="d" style="left:640.38px;top:305px;transform:matrix(1,.0005,0,1,0,0.82);font-size:6px;line-height:7.8px;color:#1a1a1a;">EoIP Tunnel</div>
<div style="left:674px;top:304.4px;width:29.5px;height:9.6px;background:#d0cdc7;box-shadow:inset .7px .7px 0 #efeeea,inset -.7px 0 0 #a9a6a0"></div>
<div class="d" style="left:676.73px;top:305px;transform:matrix(1,.0005,0,1,0,0.82);font-size:6px;line-height:7.8px;color:#1a1a1a;">IP Tunnel</div>
<div style="left:704.3px;top:304.4px;width:11px;height:9.6px;background:#cfccc6;box-shadow:inset .7px .7px 0 #efeeea,inset -.7px 0 0 #a9a6a0"></div>
<div class="d" style="left:707.22px;top:306px;transform:matrix(1,.0005,0,1,0,0.02);font-size:6px;line-height:7.8px;color:#9a9893;">...</div>
<div style="left:537.50px;top:314.20px;width:188.00px;height:0.70px;background:#f7f6f3;"></div>
<div style="left:538.4px;top:302.6px;width:31px;height:12.4px;background:#d6d3cd;box-shadow:inset .8px .8px 0 #f7f6f3,inset -.8px 0 0 #8b8984"></div>
<div class="d" style="left:541.91px;top:304px;transform:matrix(1,.0005,0,1,0,0.82);font-size:6px;line-height:7.8px;color:#1a1a1a;">Interface</div>
<div style="left:539.00px;top:316.60px;width:15.60px;height:11.50px;background:#dcd9d3;box-shadow:inset .8px .8px 0 #fbfaf8,inset -.8px -.8px 0 #86847f"></div>
<div style="left:556.40px;top:316.60px;width:12.20px;height:11.50px;background:#dcd9d3;box-shadow:inset .8px .8px 0 #fbfaf8,inset -.8px -.8px 0 #86847f"></div>
<div style="left:573.40px;top:316.60px;width:11.80px;height:11.50px;background:#dcd9d3;box-shadow:inset .8px .8px 0 #fbfaf8,inset -.8px -.8px 0 #86847f"></div>
<div style="left:587.30px;top:316.60px;width:11.40px;height:11.50px;background:#dcd9d3;box-shadow:inset .8px .8px 0 #fbfaf8,inset -.8px -.8px 0 #86847f"></div>
<div style="left:604.00px;top:316.60px;width:11.60px;height:11.50px;background:#dcd9d3;box-shadow:inset .8px .8px 0 #fbfaf8,inset -.8px -.8px 0 #86847f"></div>
<div style="left:621.00px;top:316.60px;width:11.60px;height:11.50px;background:#dcd9d3;box-shadow:inset .8px .8px 0 #fbfaf8,inset -.8px -.8px 0 #86847f"></div>
<svg style="left:541px;top:319.4px" width="12" height="6" viewBox="0 0 12 6"><path d="M2.9 0 V5.8 M0 2.9 H5.8" stroke="#0a0ac8" stroke-width="1.9"/><path d="M7.4 2 H10.6 L9 3.8 Z" fill="#111"/></svg>
<svg style="left:559.4px;top:321px" width="6" height="3" viewBox="0 0 6 3"><rect x="0" y=".4" width="6" height="2" fill="#c4c1bb" stroke="#e9e8e4" stroke-width=".4"/></svg>
<svg style="left:576px;top:319.2px" width="7" height="6.4" viewBox="0 0 7 6.4"><path d="M.6 3.4 L2.6 5.4 L6.4 .8" fill="none" stroke="#0a0ad0" stroke-width="1.5"/></svg>
<svg style="left:590px;top:319.4px" width="6" height="6" viewBox="0 0 6 6"><path d="M.6 .6 L5.4 5.4 M5.4 .6 L.6 5.4" stroke="#d81010" stroke-width="1.6"/></svg>
<svg style="left:606.4px;top:319.6px" width="7" height="5.6" viewBox="0 0 7 5.6"><path d="M1.8 .4 H6.6 V5.2 H.4 V1.8 Z" fill="#f4f000" stroke="#555" stroke-width=".6"/></svg>
<svg style="left:623.6px;top:319.2px" width="6.4" height="6.6" viewBox="0 0 6.4 6.6"><path d="M.3 .5 H6.1 L3.9 3.2 V6.2 H2.5 V3.2 Z" fill="#6d7fb5" stroke="#39457a" stroke-width=".5"/></svg>
<div style="left:698.00px;top:319.40px;width:28.00px;height:9.20px;background:#fff;box-shadow:inset .8px .8px 0 #7d7b76,inset -.8px -.8px 0 #f4f3f0"></div>
<div class="d" style="left:700.60px;top:320px;transform:matrix(1,.0005,0,1,0,0.42);font-size:6px;line-height:7.8px;color:#9b9b9b;font-style:italic;">Find</div>
<div style="left:539.50px;top:330.30px;width:186.50px;height:121.20px;background:#fff;"></div>
<div style="left:539.50px;top:330.30px;width:186.50px;height:9.20px;background:#d8d5cf;box-shadow:inset 0 -.7px 0 #a5a29c,inset 0 .7px 0 #f3f2ef"></div>
<div style="left:553.00px;top:330.90px;width:0.60px;height:8.10px;background:#b3b0aa;"></div>
<div style="left:553.60px;top:330.90px;width:0.50px;height:8.10px;background:#ebe9e5;"></div>
<div style="left:553.20px;top:339.50px;width:0.60px;height:48.00px;background:#ecebe8;"></div>
<div style="left:585.20px;top:330.90px;width:0.60px;height:8.10px;background:#b3b0aa;"></div>
<div style="left:585.80px;top:330.90px;width:0.50px;height:8.10px;background:#ebe9e5;"></div>
<div style="left:585.40px;top:339.50px;width:0.60px;height:48.00px;background:#ecebe8;"></div>
<div style="left:615.20px;top:330.90px;width:0.60px;height:8.10px;background:#b3b0aa;"></div>
<div style="left:615.80px;top:330.90px;width:0.50px;height:8.10px;background:#ebe9e5;"></div>
<div style="left:615.40px;top:339.50px;width:0.60px;height:48.00px;background:#ecebe8;"></div>
<div style="left:634.40px;top:330.90px;width:0.60px;height:8.10px;background:#b3b0aa;"></div>
<div style="left:635.00px;top:330.90px;width:0.50px;height:8.10px;background:#ebe9e5;"></div>
<div style="left:634.60px;top:339.50px;width:0.60px;height:48.00px;background:#ecebe8;"></div>
<div style="left:656.40px;top:330.90px;width:0.60px;height:8.10px;background:#b3b0aa;"></div>
<div style="left:657.00px;top:330.90px;width:0.50px;height:8.10px;background:#ebe9e5;"></div>
<div style="left:656.60px;top:339.50px;width:0.60px;height:48.00px;background:#ecebe8;"></div>
<div style="left:690.00px;top:330.90px;width:0.60px;height:8.10px;background:#b3b0aa;"></div>
<div style="left:690.60px;top:330.90px;width:0.50px;height:8.10px;background:#ebe9e5;"></div>
<div style="left:690.20px;top:339.50px;width:0.60px;height:48.00px;background:#ecebe8;"></div>
<div style="left:717.20px;top:330.90px;width:0.60px;height:8.10px;background:#b3b0aa;"></div>
<div style="left:717.80px;top:330.90px;width:0.50px;height:8.10px;background:#ebe9e5;"></div>
<div style="left:717.40px;top:339.50px;width:0.60px;height:48.00px;background:#ecebe8;"></div>
<div class="d" style="left:554.80px;top:331px;transform:matrix(1,.0005,0,1,0,0.72);font-size:6px;line-height:7.8px;color:#1a1a1a;">Name</div>
<div class="d" style="left:587.00px;top:331px;transform:matrix(1,.0005,0,1,0,0.72);font-size:6px;line-height:7.8px;color:#1a1a1a;">Type</div>
<div class="d" style="left:617.20px;top:331px;transform:matrix(1,.0005,0,1,0,0.72);font-size:6px;line-height:7.8px;color:#1a1a1a;">Act...</div>
<div class="d" style="left:636.00px;top:331px;transform:matrix(1,.0005,0,1,0,0.72);font-size:6px;line-height:7.8px;color:#1a1a1a;">L2 MTU</div>
<div class="d" style="left:658.20px;top:331px;transform:matrix(1,.0005,0,1,0,0.72);font-size:6px;line-height:7.8px;color:#1a1a1a;">Tx</div>
<div class="d" style="left:691.80px;top:331px;transform:matrix(1,.0005,0,1,0,0.72);font-size:6px;line-height:7.8px;color:#1a1a1a;">Rx</div>
<svg style="left:580.5px;top:333.6px" width="4" height="3.4" viewBox="0 0 4 3.4"><path d="M.3 3.1 L2 .3 L3.7 3.1" fill="none" stroke="#f6f5f2" stroke-width=".6"/></svg>
<svg style="left:719.4px;top:333.6px" width="5.4" height="3.2" viewBox="0 0 5.4 3.2"><path d="M0 0 H5.4 L2.7 3.2 Z" fill="#111"/></svg>
<div style="left:539.50px;top:347.40px;width:186.50px;height:0.50px;background:#ecebe8;"></div>
<svg style="left:556.2px;top:340.30px" width="7" height="6.4" viewBox="0 0 7 6.4"><path d="M0 3.2 L2.4 .8 V5.6 Z M7 3.2 L4.6 .8 V5.6 Z" fill="#a8101c"/><path d="M3.5 .6 V5.8" stroke="#7c8898" stroke-width="1.2" fill="none"/><path d="M2.6 .4 H4.4 M2.6 6 H4.4" stroke="#333" stroke-width=".8" fill="none"/></svg>
<div class="d r" style="top:339px;transform:matrix(1,.0005,0,1,0,0.72);color:#141414"><span style="left:541px">R</span><span style="left:563.8px">ether1</span><span style="left:586.6px">Ethernet</span><span style="left:610px;width:24.2px;text-align:right">1500</span><span style="left:630px;width:26px;text-align:right">1598</span><span style="left:650px;width:40.2px;text-align:right">353.6 Mbps</span><span style="left:685px;width:40.6px;text-align:right">8.0 Mbps</span></div>
<div style="left:539.50px;top:348.00px;width:186.50px;height:7.00px;background:#a3c3ee;"></div>
<div style="left:539.50px;top:355.26px;width:186.50px;height:0.50px;background:#a3c3ee;"></div>
<svg style="left:556.2px;top:348.16px" width="7" height="6.4" viewBox="0 0 7 6.4"><path d="M0 3.2 L2.4 .8 V5.6 Z M7 3.2 L4.6 .8 V5.6 Z" fill="#a8101c"/><path d="M3.5 .6 V5.8" stroke="#7c8898" stroke-width="1.2" fill="none"/><path d="M2.6 .4 H4.4 M2.6 6 H4.4" stroke="#333" stroke-width=".8" fill="none"/></svg>
<div class="d r" style="top:347px;transform:matrix(1,.0005,0,1,0,0.58);color:#141414"><span style="left:541px">R</span><span style="left:563.8px">ether2</span><span style="left:586.6px">Ethernet</span><span style="left:610px;width:24.2px;text-align:right">1500</span><span style="left:630px;width:26px;text-align:right">1598</span><span style="left:650px;width:40.2px;text-align:right">39.3 Mbps</span><span style="left:685px;width:40.6px;text-align:right">354.3 Mbps</span></div>
<div style="left:539.50px;top:363.12px;width:186.50px;height:0.50px;background:#ecebe8;"></div>
<svg style="left:556.2px;top:356.02px" width="7" height="6.4" viewBox="0 0 7 6.4"><path d="M0 3.2 L2.4 .8 V5.6 Z M7 3.2 L4.6 .8 V5.6 Z" fill="#a8101c"/><path d="M3.5 .6 V5.8" stroke="#7c8898" stroke-width="1.2" fill="none"/><path d="M2.6 .4 H4.4 M2.6 6 H4.4" stroke="#333" stroke-width=".8" fill="none"/></svg>
<div class="d r" style="top:355px;transform:matrix(1,.0005,0,1,0,0.44);color:#141414"><span style="left:541px"></span><span style="left:563.8px">ether3</span><span style="left:586.6px">Ethernet</span><span style="left:610px;width:24.2px;text-align:right">1500</span><span style="left:630px;width:26px;text-align:right">1598</span><span style="left:650px;width:40.2px;text-align:right">0 bps</span><span style="left:685px;width:40.6px;text-align:right">0 bps</span></div>
<div style="left:539.50px;top:370.98px;width:186.50px;height:0.50px;background:#ecebe8;"></div>
<svg style="left:556.2px;top:363.88px" width="7" height="6.4" viewBox="0 0 7 6.4"><path d="M0 3.2 L2.4 .8 V5.6 Z M7 3.2 L4.6 .8 V5.6 Z" fill="#a8101c"/><path d="M3.5 .6 V5.8" stroke="#7c8898" stroke-width="1.2" fill="none"/><path d="M2.6 .4 H4.4 M2.6 6 H4.4" stroke="#333" stroke-width=".8" fill="none"/></svg>
<div class="d r" style="top:363px;transform:matrix(1,.0005,0,1,0,0.3);color:#141414"><span style="left:541px"></span><span style="left:563.8px">ether4</span><span style="left:586.6px">Ethernet</span><span style="left:610px;width:24.2px;text-align:right">1500</span><span style="left:630px;width:26px;text-align:right">1598</span><span style="left:650px;width:40.2px;text-align:right">0 bps</span><span style="left:685px;width:40.6px;text-align:right">0 bps</span></div>
<div style="left:539.50px;top:378.84px;width:186.50px;height:0.50px;background:#ecebe8;"></div>
<svg style="left:556.2px;top:371.74px" width="7" height="6.4" viewBox="0 0 7 6.4"><path d="M0 3.2 L2.4 .8 V5.6 Z M7 3.2 L4.6 .8 V5.6 Z" fill="#b9b7b3"/><path d="M3.5 .6 V5.8" stroke="#d4d2ce" stroke-width="1.2" fill="none"/><path d="M2.6 .4 H4.4 M2.6 6 H4.4" stroke="#c9c7c3" stroke-width=".8" fill="none"/></svg>
<div class="d r" style="top:371px;transform:matrix(1,.0005,0,1,0,0.16);color:#a5a39f"><span style="left:541px">X</span><span style="left:563.8px">ether5</span><span style="left:586.6px">Ethernet</span><span style="left:610px;width:24.2px;text-align:right">1500</span><span style="left:630px;width:26px;text-align:right">1598</span><span style="left:650px;width:40.2px;text-align:right">0 bps</span><span style="left:685px;width:40.6px;text-align:right">0 bps</span></div>
<div style="left:539.50px;top:386.70px;width:186.50px;height:0.50px;background:#ecebe8;"></div>
<svg style="left:556.2px;top:379.60px" width="7" height="6.4" viewBox="0 0 7 6.4"><path d="M0 3.2 L2.4 .8 V5.6 Z M7 3.2 L4.6 .8 V5.6 Z" fill="#b9b7b3"/><path d="M3.5 .6 V5.8" stroke="#d4d2ce" stroke-width="1.2" fill="none"/><path d="M2.6 .4 H4.4 M2.6 6 H4.4" stroke="#c9c7c3" stroke-width=".8" fill="none"/></svg>
<div class="d r" style="top:379px;transform:matrix(1,.0005,0,1,0,0.02);color:#a5a39f"><span style="left:541px">X</span><span style="left:563.8px">sfp1</span><span style="left:586.6px">Ethernet</span><span style="left:610px;width:24.2px;text-align:right">1500</span><span style="left:630px;width:26px;text-align:right">1600</span><span style="left:650px;width:40.2px;text-align:right">0 bps</span><span style="left:685px;width:40.6px;text-align:right">0 bps</span></div>
<div style="left:539.50px;top:451.60px;width:186.50px;height:7.90px;background:#c1beb8;"></div>
<div style="left:539.60px;top:451.60px;width:8.00px;height:7.90px;background:#dcd9d3;box-shadow:inset .8px .8px 0 #fbfaf8,inset -.8px -.8px 0 #86847f"></div>
<div style="left:717.60px;top:451.60px;width:8.40px;height:7.90px;background:#dcd9d3;box-shadow:inset .8px .8px 0 #fbfaf8,inset -.8px -.8px 0 #86847f"></div>
<div style="left:547.60px;top:451.60px;width:66.60px;height:7.90px;background:#d6d3cd;box-shadow:inset .7px .7px 0 #f3f2ef,inset -.7px -.7px 0 #96948f"></div>
<svg style="left:541.9px;top:453.8px" width="3.4" height="3.4" viewBox="0 0 3.4 3.4"><path d="M1.7 0 L3.4 1.7 L1.7 3.4 L0 1.7 Z" fill="#111"/></svg>
<svg style="left:720.3px;top:453.8px" width="3.4" height="3.4" viewBox="0 0 3.4 3.4"><path d="M1.7 0 L3.4 1.7 L1.7 3.4 L0 1.7 Z" fill="#111"/></svg>
<div style="left:538.00px;top:460.00px;width:188.00px;height:10.60px;background:#d9d6d1;box-shadow:inset 0 .7px 0 #eceae6"></div>
<div class="d" style="left:540.60px;top:461px;transform:matrix(1,.0005,0,1,0,0.02);font-size:6px;line-height:7.8px;color:#1a1a1a;">6 items (1 selected)</div>
<div style="left:461px;top:461px;width:73.3px;height:25px;background:rgba(32,32,32,.9);border-radius:1.6px 1.6px 0 0"></div>
<svg style="left:461px;top:461px" width="74" height="24" viewBox="0 0 74 24"><path d="M8.8 12.6 H17.6" stroke="#fff" stroke-width="1.5"/><circle cx="35.2" cy="10.8" r="3.3" fill="none" stroke="#fff" stroke-width="1.3"/><path d="M33.4 10.8 H37" stroke="#fff" stroke-width=".8"/><path d="M37.6 13.4 L41.6 17.2" stroke="#fff" stroke-width="1.6"/><path d="M56 12.6 H65.2 M60.6 8 V17.2" stroke="#fff" stroke-width="1.4"/></svg>
<div id="R" style="left:727px;top:0;width:273px;height:485px;background:#343330"></div>
<div style="left:726.60px;top:0.00px;width:2.00px;height:485.00px;background:#1e1e1c;"></div>
<div style="left:994.60px;top:0.00px;width:5.40px;height:482.40px;background:#3e3d39;"></div>
<div style="left:995.60px;top:411.00px;width:3.40px;height:65.00px;background:#4d4c48;border-radius:1.7px"></div>
<svg style="left:995.4px;top:477.6px" width="4" height="3" viewBox="0 0 4 3"><path d="M.4 .4 L2 2.4 L3.6 .4" fill="none" stroke="#7c7b76" stroke-width=".7"/></svg>
<div style="left:727.00px;top:482.40px;width:273.00px;height:2.60px;background:#2b2a28;"></div>
<div class="m" style="top:0px;transform:matrix(1,.0005,0,1,0,0.71);">[ 22] 173.00-174.00 sec  2.05 MBytes  17.2 Mbits/sec    2   18.4 KBytes</div>
<div class="m" style="top:15px;transform:matrix(1,.0005,0,1,0,0.38);">[ 24] 173.00-174.00 sec  2.05 MBytes  17.2 Mbits/sec    5   18.4 KBytes</div>
<div class="m" style="top:30px;transform:matrix(1,.0005,0,1,0,0.04);">[ 26] 173.00-174.00 sec  2.05 MBytes  17.2 Mbits/sec    5   17.0 KBytes</div>
<div class="m" style="top:44px;transform:matrix(1,.0005,0,1,0,0.71);">[ 28] 173.00-174.00 sec  2.05 MBytes  17.2 Mbits/sec    5   17.0 KBytes</div>
<div class="m" style="top:59px;transform:matrix(1,.0005,0,1,0,0.37);">[ 30] 173.00-174.00 sec  1.99 MBytes  16.7 Mbits/sec    4   17.0 KBytes</div>
<div class="m" style="top:74px;transform:matrix(1,.0005,0,1,0,0.03);">[ 32] 173.00-174.00 sec  1.99 MBytes  16.7 Mbits/sec    1   17.0 KBytes</div>
<div class="m" style="top:88px;transform:matrix(1,.0005,0,1,0,0.7);">[ 34] 173.00-174.00 sec  1.99 MBytes  16.7 Mbits/sec    4   14.1 KBytes</div>
<div class="m" style="top:103px;transform:matrix(1,.0005,0,1,0,0.36);">[ 36] 173.00-174.00 sec  1.99 MBytes  16.7 Mbits/sec    6   14.1 KBytes</div>
<div class="m" style="top:118px;transform:matrix(1,.0005,0,1,0,0.03);">[ 38] 173.00-174.00 sec  1.99 MBytes  16.7 Mbits/sec    4   14.1 KBytes</div>
<div class="m" style="top:132px;transform:matrix(1,.0005,0,1,0,0.69);">[ 40] 173.00-174.00 sec  1.99 MBytes  16.7 Mbits/sec    3   12.7 KBytes</div>
<div class="m" style="top:147px;transform:matrix(1,.0005,0,1,0,0.35);">[ 42] 173.00-174.00 sec  1.99 MBytes  16.7 Mbits/sec    4   17.0 KBytes</div>
<div class="m" style="top:162px;transform:matrix(1,.0005,0,1,0,0.02);">[SUM] 173.00-174.00 sec  40.3 MBytes   338 Mbits/sec   74</div>
<div class="m" style="top:169px;transform:matrix(1,.0005,0,1,0,0.35);">- - - - - - - - - - - - - - - - - - - - - - - - -</div>
<div class="m" style="top:176px;transform:matrix(1,.0005,0,1,0,0.68);">[  4] 174.00-175.00 sec  2.05 MBytes  17.2 Mbits/sec    3   17.0 KBytes</div>
<div class="m" style="top:191px;transform:matrix(1,.0005,0,1,0,0.35);">[  6] 174.00-175.00 sec  1.99 MBytes  16.7 Mbits/sec    5   14.1 KBytes</div>
<div class="m" style="top:206px;transform:matrix(1,.0005,0,1,0,0.01);">[  8] 174.00-175.00 sec  2.05 MBytes  17.2 Mbits/sec    3   19.8 KBytes</div>
<div class="m" style="top:220px;transform:matrix(1,.0005,0,1,0,0.67);">[ 10] 174.00-175.00 sec  2.05 MBytes  17.2 Mbits/sec    4   12.7 KBytes</div>
<div class="m" style="top:235px;transform:matrix(1,.0005,0,1,0,0.34);">[ 12] 174.00-175.00 sec  1.99 MBytes  16.7 Mbits/sec    3   18.4 KBytes</div>
<div class="m" style="top:250px;transform:matrix(1,.0005,0,1,0,0);">[ 14] 174.00-175.00 sec  2.05 MBytes  17.2 Mbits/sec    2   18.4 KBytes</div>
<div class="m" style="top:264px;transform:matrix(1,.0005,0,1,0,0.67);">[ 16] 174.00-175.00 sec  2.05 MBytes  17.2 Mbits/sec    2   19.8 KBytes</div>
<div class="m" style="top:279px;transform:matrix(1,.0005,0,1,0,0.33);">[ 18] 174.00-175.00 sec  1.99 MBytes  16.7 Mbits/sec    2   18.4 KBytes</div>
<div class="m" style="top:293px;transform:matrix(1,.0005,0,1,0,0.99);">[ 20] 174.00-175.00 sec  1.99 MBytes  16.7 Mbits/sec    3   12.7 KBytes</div>
<div class="m" style="top:308px;transform:matrix(1,.0005,0,1,0,0.66);">[ 22] 174.00-175.00 sec  1.99 MBytes  16.7 Mbits/sec    0   19.8 KBytes</div>
<div class="m" style="top:323px;transform:matrix(1,.0005,0,1,0,0.32);">[ 24] 174.00-175.00 sec  2.05 MBytes  17.2 Mbits/sec    2   17.0 KBytes</div>
<div class="m" style="top:337px;transform:matrix(1,.0005,0,1,0,0.99);">[ 26] 174.00-175.00 sec  1.99 MBytes  16.7 Mbits/sec    2   15.6 KBytes</div>
<div class="m" style="top:352px;transform:matrix(1,.0005,0,1,0,0.65);">[ 28] 174.00-175.00 sec  1.99 MBytes  16.7 Mbits/sec    0   21.2 KBytes</div>
<div class="m" style="top:367px;transform:matrix(1,.0005,0,1,0,0.31);">[ 30] 174.00-175.00 sec  1.99 MBytes  16.7 Mbits/sec    3   17.0 KBytes</div>
<div class="m" style="top:381px;transform:matrix(1,.0005,0,1,0,0.98);">[ 32] 174.00-175.00 sec  1.99 MBytes  16.7 Mbits/sec    3   18.4 KBytes</div>
<div class="m" style="top:396px;transform:matrix(1,.0005,0,1,0,0.64);">[ 34] 174.00-175.00 sec  1.99 MBytes  16.7 Mbits/sec    3   18.4 KBytes</div>
<div class="m" style="top:411px;transform:matrix(1,.0005,0,1,0,0.31);">[ 36] 174.00-175.00 sec  1.99 MBytes  16.7 Mbits/sec    6   12.7 KBytes</div>
<div class="m" style="top:425px;transform:matrix(1,.0005,0,1,0,0.97);">[ 38] 174.00-175.00 sec  1.99 MBytes  16.7 Mbits/sec    2   17.0 KBytes</div>
<div class="m" style="top:440px;transform:matrix(1,.0005,0,1,0,0.63);">[ 40] 174.00-175.00 sec  1.99 MBytes  16.7 Mbits/sec    3   18.4 KBytes</div>
<div class="m" style="top:455px;transform:matrix(1,.0005,0,1,0,0.3);">[ 42] 174.00-175.00 sec  1.99 MBytes  16.7 Mbits/sec    3   17.0 KBytes</div>
<div class="m" style="top:469px;transform:matrix(1,.0005,0,1,0,0.96);">[SUM] 174.00-175.00 sec  40.1 MBytes   337 Mbits/sec   54</div>
<div style="left:729.2px;top:477.2px;width:3px;height:6.6px;box-shadow:inset 0 0 0 .6px #cfcfc8"></div>
<div id="L" class="s" style="-webkit-text-stroke:.1px;left:0;top:0;width:371px;height:485px;background:#fff;overflow:hidden">
<div style="left:0.00px;top:0.00px;width:371.00px;height:8.60px;background:linear-gradient(#0081bf,#0c97d6);"></div>
<div style="left:5.00px;top:0.00px;width:12.50px;height:1.60px;background:#a9cfe6;"></div>
<div style="left:367.00px;top:11.00px;width:1.60px;height:293.00px;background:#b3b3b3;"></div>
<div style="left:11.50px;top:21.20px;width:25.00px;height:9.00px;background:#0a96dc;border-radius:1.6px"></div>
<div style="left:15.25px;top:22px;transform:matrix(1,.0005,0,1,0,0.59);font-size:5.2px;line-height:6.76px;color:#fff;font-weight:700;letter-spacing:-0.075px;">LOCAL</div>
<div style="left:321.00px;top:21.20px;width:29.60px;height:9.00px;background:#a6179c;border-radius:1.6px"></div>
<div style="left:324.80px;top:22px;transform:matrix(1,.0005,0,1,0,0.59);font-size:5.2px;line-height:6.76px;color:#fff;font-weight:700;letter-spacing:-0.034px;">REMOTE</div>
<div style="left:157.50px;top:20px;transform:matrix(1,.0005,0,1,0,0.75);font-size:5.3px;line-height:6.89px;color:#2e2e2e;font-weight:700;letter-spacing:-0.104px;">LINK NAME</div>
<div style="left:188.00px;top:19px;transform:matrix(1,.0005,0,1,0,0.73);font-size:6.3px;line-height:8.19px;color:#2e2e2e;font-weight:700;letter-spacing:-0.250px;">UBNT</div>
<div style="left:91.00px;top:29px;transform:matrix(1,.0005,0,1,0,0.73);font-size:6.2px;line-height:8.06px;color:#2e2e2e;font-weight:700;letter-spacing:-0.254px;">RECEIVE CAPACITY</div>
<div style="left:214.50px;top:29px;transform:matrix(1,.0005,0,1,0,0.73);font-size:6.2px;line-height:8.06px;color:#2e2e2e;font-weight:700;letter-spacing:-0.254px;">RECEIVE CAPACITY</div>
<div style="left:14.00px;top:37.20px;width:335.00px;height:1.50px;background:#0a96dc;"></div>
<svg style="left:11px;top:35px" width="5" height="6" viewBox="0 0 5 6"><path d="M0.4 3 L4.6 0.6 V5.4 Z" fill="#0a96dc"/></svg>
<svg style="left:346.6px;top:35px" width="5" height="6" viewBox="0 0 5 6"><path d="M4.6 3 L0.4 0.6 V5.4 Z" fill="#0a96dc"/></svg>
<div style="left:87.00px;top:39.50px;width:65.00px;height:15.80px;background:#0a96dc;border-radius:1.5px"></div>
<div style="left:210.00px;top:39.50px;width:65.40px;height:15.80px;background:#a6179c;border-radius:1.5px"></div>
<svg style="left:89.6px;top:44.4px" width="12" height="7" viewBox="0 0 12 7"><path d="M1.3 6.6 A4.7 4.7 0 0 1 10.7 6.6" fill="none" stroke="#fff" stroke-width="1.7" stroke-opacity="0.8" stroke-dasharray="1.5 .45"/><path d="M6 6.6 L7.6 3.9" stroke="#fff" stroke-width=".9" stroke-opacity="0.8"/></svg>
<svg style="left:212.8px;top:44.4px" width="12" height="7" viewBox="0 0 12 7"><path d="M1.3 6.6 A4.7 4.7 0 0 1 10.7 6.6" fill="none" stroke="#fff" stroke-width="1.7" stroke-opacity="0.6" stroke-dasharray="1.5 .45"/><path d="M6 6.6 L7.6 3.9" stroke="#fff" stroke-width=".9" stroke-opacity="0.6"/></svg>
<div style="left:103.50px;top:43px;transform:matrix(1,.0005,0,1,0,0.03);font-size:8.6px;line-height:11.18px;color:#e8f4fb;letter-spacing:-0.049px;">354.93</div>
<div style="left:133.00px;top:45px;transform:matrix(1,.0005,0,1,0,0.08);font-size:6.6px;line-height:8.58px;color:#d4ebf8;letter-spacing:0.094px;">Mbps</div>
<div style="left:228.00px;top:43px;transform:matrix(1,.0005,0,1,0,0.03);font-size:8.6px;line-height:11.18px;color:#f6e6f4;letter-spacing:-0.143px;">115.14</div>
<div style="left:256.30px;top:45px;transform:matrix(1,.0005,0,1,0,0.08);font-size:6.6px;line-height:8.58px;color:#ecd0ea;letter-spacing:-0.081px;">Mbps</div>
<div style="left:133.00px;top:29.50px;width:96.00px;height:16.50px;background:#0a96dc;border-radius:1.5px"></div>
<svg style="left:136px;top:33px" width="8" height="10" viewBox="0 0 8 10"><rect x="1" y="4.2" width="6" height="5" rx=".6" fill="none" stroke="#fff" stroke-width=".9" stroke-opacity=".85"/><path d="M2.2 4.2 V2.8 A1.8 1.8 0 0 1 5.8 2.8 V4.2" fill="none" stroke="#fff" stroke-width=".9" stroke-opacity=".85"/><rect x="3.5" y="6" width="1" height="1.6" fill="#fff" fill-opacity=".85"/></svg>
<div style="left:149.00px;top:33px;transform:matrix(1,.0005,0,1,0,0.22);font-size:8.4px;line-height:10.92px;color:#e4f2fb;letter-spacing:-0.078px;">3.130 km ( 1.945 mi )</div>
<div style="left:41.00px;top:48px;transform:matrix(1,.0005,0,1,0,0.96);font-size:5.4px;line-height:7.02px;color:#2e2e2e;font-weight:700;letter-spacing:-0.132px;">DEVICE NAME</div>
<div style="left:62.50px;top:57px;transform:matrix(1,.0005,0,1,0,0.16);font-size:5.4px;line-height:7.02px;color:#2e2e2e;font-weight:700;letter-spacing:-0.121px;">UBNT</div>
<div style="left:39.50px;top:69px;transform:matrix(1,.0005,0,1,0,0.76);font-size:5.4px;line-height:7.02px;color:#2e2e2e;font-weight:700;letter-spacing:-0.222px;">MAC ADDRESS</div>
<div style="left:29.00px;top:77px;transform:matrix(1,.0005,0,1,0,0.96);font-size:5.4px;line-height:7.02px;color:#2e2e2e;font-weight:700;letter-spacing:0.056px;">04:18:D6:E3:8D:40</div>
<div style="left:87.20px;top:58px;transform:matrix(1,.0005,0,1,0,0.16);font-size:5.4px;line-height:7.02px;color:#2e2e2e;font-weight:700;letter-spacing:-0.175px;">TX POWER (EIRP)</div>
<div style="left:132.00px;top:58px;transform:matrix(1,.0005,0,1,0,0.91);font-size:5.8px;line-height:7.54px;color:#2e2e2e;font-weight:700;letter-spacing:-0.159px;">45 dBm</div>
<div style="left:87.20px;top:66px;transform:matrix(1,.0005,0,1,0,0.26);font-size:5.4px;line-height:7.02px;color:#2e2e2e;font-weight:700;letter-spacing:-0.106px;">CONDUCTED</div>
<div style="left:132.00px;top:67px;transform:matrix(1,.0005,0,1,0,0.21);font-size:5.8px;line-height:7.54px;color:#2e2e2e;font-weight:700;letter-spacing:-0.159px;">18 dBm</div>
<div style="left:87.20px;top:75px;transform:matrix(1,.0005,0,1,0,0.26);font-size:5.4px;line-height:7.02px;color:#2e2e2e;font-weight:700;letter-spacing:-0.028px;">ANTENNA GAIN</div>
<div style="left:135.00px;top:76px;transform:matrix(1,.0005,0,1,0,0.21);font-size:5.8px;line-height:7.54px;color:#2e2e2e;font-weight:700;letter-spacing:-0.068px;">30 dBi</div>
<div style="left:210.50px;top:58px;transform:matrix(1,.0005,0,1,0,0.16);font-size:5.4px;line-height:7.02px;color:#2e2e2e;font-weight:700;letter-spacing:-0.175px;">TX POWER (EIRP)</div>
<div style="left:255.50px;top:58px;transform:matrix(1,.0005,0,1,0,0.91);font-size:5.8px;line-height:7.54px;color:#2e2e2e;font-weight:700;letter-spacing:-0.076px;">45 dBm</div>
<div style="left:285.00px;top:48px;transform:matrix(1,.0005,0,1,0,0.96);font-size:5.4px;line-height:7.02px;color:#2e2e2e;font-weight:700;letter-spacing:-0.128px;">REMOTE IP</div>
<div style="left:286.00px;top:57px;transform:matrix(1,.0005,0,1,0,0.29);font-size:5.2px;line-height:6.76px;color:#2a9fdd;font-weight:700;letter-spacing:0.147px;text-decoration:underline;text-decoration-color:#9fd3ef;text-decoration-thickness:.5px;text-underline-offset:.8px;">10.10.5.12</div>
<div style="left:285.00px;top:69px;transform:matrix(1,.0005,0,1,0,0.76);font-size:5.4px;line-height:7.02px;color:#2e2e2e;font-weight:700;letter-spacing:-0.203px;">MAC ADDRESS</div>
<div style="left:285.00px;top:78px;transform:matrix(1,.0005,0,1,0,0.16);font-size:5.4px;line-height:7.02px;color:#2e2e2e;font-weight:700;letter-spacing:0.039px;">04:18:D6:E3:60:B1</div>
<div style="left:123.00px;top:83px;transform:matrix(1,.0005,0,1,0,0.93);font-size:6.2px;line-height:8.06px;color:#2e2e2e;font-weight:700;letter-spacing:-0.239px;">RX FREQUENCY</div>
<div style="left:130.10px;top:89px;transform:matrix(1,.0005,0,1,0,0.82);font-size:9px;line-height:11.7px;color:#222;font-weight:700;letter-spacing:-0.229px;">5880 MHz</div>
<div style="left:193.20px;top:83px;transform:matrix(1,.0005,0,1,0,0.93);font-size:6.2px;line-height:8.06px;color:#2e2e2e;font-weight:700;letter-spacing:-0.224px;">TX FREQUENCY</div>
<div style="left:193.20px;top:89px;transform:matrix(1,.0005,0,1,0,0.82);font-size:9px;line-height:11.7px;color:#222;font-weight:700;letter-spacing:-0.191px;">5880 MHz</div>
<div style="left:107.80px;top:107px;transform:matrix(1,.0005,0,1,0,0.13);font-size:6.2px;line-height:8.06px;color:#2e2e2e;font-weight:700;letter-spacing:-0.053px;">RX CHANNEL WIDTH</div>
<div style="left:141.40px;top:112px;transform:matrix(1,.0005,0,1,0,0.92);font-size:9px;line-height:11.7px;color:#222;font-weight:700;letter-spacing:-0.103px;">50MHz</div>
<div style="left:193.20px;top:107px;transform:matrix(1,.0005,0,1,0,0.13);font-size:6.2px;line-height:8.06px;color:#2e2e2e;font-weight:700;letter-spacing:-0.060px;">TX CHANNEL WIDTH</div>
<div style="left:193.20px;top:112px;transform:matrix(1,.0005,0,1,0,0.92);font-size:9px;line-height:11.7px;color:#222;font-weight:700;letter-spacing:-0.103px;">50MHz</div>
<div style="left:144.80px;top:130px;transform:matrix(1,.0005,0,1,0,0.97);font-size:6px;line-height:7.8px;color:#2e2e2e;font-weight:700;letter-spacing:-0.124px;">MASTER</div>
<div style="left:193.20px;top:131px;transform:matrix(1,.0005,0,1,0,0.01);font-size:5.8px;line-height:7.54px;color:#2e2e2e;font-weight:700;letter-spacing:-0.181px;">SLAVE</div>
<div style="left:0.00px;top:150.30px;width:365.00px;height:1.00px;background:#e9e9e9;"></div>
<svg style="left:195px;top:170px" width="8" height="11" viewBox="0 0 8 11"><path d="M.6 .6 V8.6 L2.6 6.9 L4 10.2 L5.3 9.6 L3.9 6.5 H6.6 Z" fill="#fff" stroke="#222" stroke-width=".8" stroke-linejoin="round"/></svg>
<div style="left:11.50px;top:224px;transform:matrix(1,.0005,0,1,0,0.32);font-size:6px;line-height:7.8px;color:#2e2e2e;font-weight:700;letter-spacing:-0.129px;">SIGNAL STRENGTH</div>
<div style="left:69.00px;top:222px;transform:matrix(1,.0005,0,1,0,0.45);font-size:8.2px;line-height:10.66px;color:#222;font-weight:700;letter-spacing:0.144px;">-42 / -44</div>
<div style="left:102.60px;top:224px;transform:matrix(1,.0005,0,1,0,0.44);font-size:5.1px;line-height:6.63px;color:#2e2e2e;font-weight:700;letter-spacing:-0.109px;">dBm</div>
<div style="left:11.20px;top:234.00px;width:160.00px;height:4.50px;background:#e1e1e1;"></div>
<div style="left:11.20px;top:234.00px;width:152.30px;height:4.50px;background:#0a98dc;"></div>
<div style="left:11.20px;top:239.60px;width:160.00px;height:4.50px;background:#e1e1e1;"></div>
<div style="left:11.20px;top:239.60px;width:149.80px;height:4.50px;background:#0a98dc;"></div>
<div style="left:11.20px;top:234.00px;width:5.00px;height:4.50px;background:#111;"></div>
<div style="left:11.20px;top:239.60px;width:5.00px;height:4.50px;background:#111;"></div>
<div style="left:12.70px;top:234px;transform:matrix(1,.0005,0,1,0,0.68);font-size:3.6px;line-height:4.68px;color:#aaa;font-weight:700;">0</div>
<div style="left:12.70px;top:240px;transform:matrix(1,.0005,0,1,0,0.28);font-size:3.6px;line-height:4.68px;color:#aaa;font-weight:700;">1</div>
<div style="left:11.20px;top:248.20px;width:22.36px;height:1.90px;background:#ff1010;"></div>
<div style="left:17.90px;top:255px;transform:matrix(1,.0005,0,1,0,0.03);font-size:4.6px;line-height:5.98px;color:#c4c4c4;">1/4X</div>
<div style="left:34.56px;top:248.20px;width:21.86px;height:1.90px;background:#c8602a;"></div>
<div style="left:42.67px;top:255px;transform:matrix(1,.0005,0,1,0,0.03);font-size:4.6px;line-height:5.98px;color:#c4c4c4;">1X</div>
<div style="left:57.41px;top:248.20px;width:21.86px;height:1.90px;background:#dcb030;"></div>
<div style="left:65.53px;top:255px;transform:matrix(1,.0005,0,1,0,0.03);font-size:4.6px;line-height:5.98px;color:#c4c4c4;">2X</div>
<div style="left:80.27px;top:248.20px;width:21.86px;height:1.90px;background:#74c040;"></div>
<div style="left:88.39px;top:255px;transform:matrix(1,.0005,0,1,0,0.03);font-size:4.6px;line-height:5.98px;color:#c4c4c4;">4X</div>
<div style="left:103.13px;top:248.20px;width:21.86px;height:1.90px;background:#40bf98;"></div>
<div style="left:111.24px;top:255px;transform:matrix(1,.0005,0,1,0,0.03);font-size:4.6px;line-height:5.98px;color:#c4c4c4;">6X</div>
<div style="left:125.19px;top:248.20px;width:22.56px;height:15.80px;background:#1e8cd8;"></div>
<div style="left:132.21px;top:252px;transform:matrix(1,.0005,0,1,0,0.72);font-size:7px;line-height:9.1px;color:#f2f8fd;letter-spacing:0.019px;">8X</div>
<div style="left:148.84px;top:248.20px;width:21.86px;height:1.90px;background:#55dfc6;"></div>
<div style="left:155.68px;top:255px;transform:matrix(1,.0005,0,1,0,0.03);font-size:4.6px;line-height:5.98px;color:#c4c4c4;">10X</div>
<div style="left:81px;top:187.8px;width:84px;height:28.2px;background:#fff;border-radius:2.2px;box-shadow:0 2.6px 6px rgba(0,0,0,.5)"></div>
<svg style="left:150.8px;top:215.6px" width="8" height="5" viewBox="0 0 8 5"><path d="M0 0 H8 L4 4.4 Z" fill="#fff"/></svg>
<div style="left:154.50px;top:219.50px;width:0.55px;height:25.00px;background:rgba(60,160,225,.5);"></div>
<div style="left:89.70px;top:191px;transform:matrix(1,.0005,0,1,0,0.69);font-size:5.45px;line-height:7.09px;color:#2a9fdd;font-weight:700;letter-spacing:-0.188px;">LOCAL RX</div>
<div style="left:89.70px;top:199px;transform:matrix(1,.0005,0,1,0,0.61);font-size:5px;line-height:6.5px;color:#2e2e2e;font-weight:700;letter-spacing:-0.091px;">IDEAL POWER</div>
<div style="left:126.40px;top:199px;transform:matrix(1,.0005,0,1,0,0.62);font-size:5.4px;line-height:7.02px;color:#2a9fdd;font-weight:700;letter-spacing:-0.199px;">-46</div>
<div style="left:135.20px;top:200px;transform:matrix(1,.0005,0,1,0,0.57);font-size:4.6px;line-height:5.98px;color:#2e2e2e;font-weight:700;letter-spacing:0.129px;">dBm.</div>
<div style="left:89.70px;top:207px;transform:matrix(1,.0005,0,1,0,0.81);font-size:5px;line-height:6.5px;color:#2e2e2e;font-weight:700;letter-spacing:-0.016px;">CHAIN IMBALANCE</div>
<div style="left:138.70px;top:207px;transform:matrix(1,.0005,0,1,0,0.82);font-size:5.4px;line-height:7.02px;color:#2a9fdd;font-weight:700;letter-spacing:0.000px;">2</div>
<div style="left:143.20px;top:208px;transform:matrix(1,.0005,0,1,0,0.77);font-size:4.6px;line-height:5.98px;color:#2e2e2e;font-weight:700;letter-spacing:0.198px;">dB.</div>
<div style="left:191.30px;top:224px;transform:matrix(1,.0005,0,1,0,0.32);font-size:6px;line-height:7.8px;color:#2e2e2e;font-weight:700;letter-spacing:-0.129px;">SIGNAL STRENGTH</div>
<div style="left:248.80px;top:222px;transform:matrix(1,.0005,0,1,0,0.45);font-size:8.2px;line-height:10.66px;color:#222;font-weight:700;letter-spacing:0.144px;">-43 / -40</div>
<div style="left:282.40px;top:224px;transform:matrix(1,.0005,0,1,0,0.44);font-size:5.1px;line-height:6.63px;color:#2e2e2e;font-weight:700;letter-spacing:-0.109px;">dBm</div>
<div style="left:191.00px;top:234.00px;width:160.00px;height:4.50px;background:#e1e1e1;"></div>
<div style="left:191.00px;top:234.00px;width:151.30px;height:4.50px;background:#a6179c;"></div>
<div style="left:191.00px;top:239.60px;width:160.00px;height:4.50px;background:#e1e1e1;"></div>
<div style="left:191.00px;top:239.60px;width:155.50px;height:4.50px;background:#a6179c;"></div>
<div style="left:191.00px;top:234.00px;width:5.00px;height:4.50px;background:#111;"></div>
<div style="left:191.00px;top:239.60px;width:5.00px;height:4.50px;background:#111;"></div>
<div style="left:192.50px;top:234px;transform:matrix(1,.0005,0,1,0,0.68);font-size:3.6px;line-height:4.68px;color:#aaa;font-weight:700;">0</div>
<div style="left:192.50px;top:240px;transform:matrix(1,.0005,0,1,0,0.28);font-size:3.6px;line-height:4.68px;color:#aaa;font-weight:700;">1</div>
<div style="left:191.00px;top:248.20px;width:22.36px;height:1.90px;background:#ff1010;"></div>
<div style="left:197.70px;top:255px;transform:matrix(1,.0005,0,1,0,0.03);font-size:4.6px;line-height:5.98px;color:#c4c4c4;">1/4X</div>
<div style="left:214.36px;top:248.20px;width:21.86px;height:1.90px;background:#c8602a;"></div>
<div style="left:222.47px;top:255px;transform:matrix(1,.0005,0,1,0,0.03);font-size:4.6px;line-height:5.98px;color:#c4c4c4;">1X</div>
<div style="left:237.21px;top:248.20px;width:21.86px;height:1.90px;background:#dcb030;"></div>
<div style="left:245.33px;top:255px;transform:matrix(1,.0005,0,1,0,0.03);font-size:4.6px;line-height:5.98px;color:#c4c4c4;">2X</div>
<div style="left:260.07px;top:248.20px;width:21.86px;height:1.90px;background:#74c040;"></div>
<div style="left:268.19px;top:255px;transform:matrix(1,.0005,0,1,0,0.03);font-size:4.6px;line-height:5.98px;color:#c4c4c4;">4X</div>
<div style="left:282.93px;top:248.20px;width:21.86px;height:1.90px;background:#40bf98;"></div>
<div style="left:291.04px;top:255px;transform:matrix(1,.0005,0,1,0,0.03);font-size:4.6px;line-height:5.98px;color:#c4c4c4;">6X</div>
<div style="left:304.99px;top:248.20px;width:22.56px;height:15.80px;background:#1e8cd8;"></div>
<div style="left:312.01px;top:252px;transform:matrix(1,.0005,0,1,0,0.72);font-size:7px;line-height:9.1px;color:#f2f8fd;letter-spacing:0.019px;">8X</div>
<div style="left:328.64px;top:248.20px;width:21.86px;height:1.90px;background:#55dfc6;"></div>
<div style="left:335.48px;top:255px;transform:matrix(1,.0005,0,1,0,0.03);font-size:4.6px;line-height:5.98px;color:#c4c4c4;">10X</div>
<div style="left:261.2px;top:187.8px;width:84.0px;height:28.2px;background:#fff;border-radius:2.2px;box-shadow:0 2.6px 6px rgba(0,0,0,.5)"></div>
<svg style="left:330.8px;top:215.6px" width="8" height="5" viewBox="0 0 8 5"><path d="M0 0 H8 L4 4.4 Z" fill="#fff"/></svg>
<div style="left:334.50px;top:219.50px;width:0.55px;height:25.00px;background:rgba(60,160,225,.5);"></div>
<div style="left:269.90px;top:191px;transform:matrix(1,.0005,0,1,0,0.69);font-size:5.45px;line-height:7.09px;color:#a6179c;font-weight:700;letter-spacing:-0.114px;">REMOTE RX</div>
<div style="left:269.90px;top:199px;transform:matrix(1,.0005,0,1,0,0.61);font-size:5px;line-height:6.5px;color:#2e2e2e;font-weight:700;letter-spacing:-0.091px;">IDEAL POWER</div>
<div style="left:306.60px;top:199px;transform:matrix(1,.0005,0,1,0,0.62);font-size:5.4px;line-height:7.02px;color:#a6179c;font-weight:700;letter-spacing:-0.199px;">-46</div>
<div style="left:315.40px;top:200px;transform:matrix(1,.0005,0,1,0,0.57);font-size:4.6px;line-height:5.98px;color:#2e2e2e;font-weight:700;letter-spacing:-0.206px;">dBm</div>
<div style="left:269.90px;top:207px;transform:matrix(1,.0005,0,1,0,0.81);font-size:5px;line-height:6.5px;color:#2e2e2e;font-weight:700;letter-spacing:-0.016px;">CHAIN IMBALANCE</div>
<div style="left:318.90px;top:207px;transform:matrix(1,.0005,0,1,0,0.82);font-size:5.4px;line-height:7.02px;color:#a6179c;font-weight:700;letter-spacing:-0.078px;">+3</div>
<div style="left:326.60px;top:208px;transform:matrix(1,.0005,0,1,0,0.77);font-size:4.6px;line-height:5.98px;color:#2e2e2e;font-weight:700;letter-spacing:-0.263px;">dB</div>
<div style="left:33.00px;top:307px;transform:matrix(1,.0005,0,1,0,0.82);font-size:5.6px;line-height:7.28px;color:#b23bb0;font-weight:700;letter-spacing:0.025px;">LOCAL RX  REAL-TIME CAPACITY / SPEED</div>
<div style="left:37.20px;top:316px;transform:matrix(1,.0005,0,1,0,0.84);font-size:5.1px;line-height:6.63px;color:#2e2e2e;font-weight:700;letter-spacing:0.097px;">MODULATION RATE</div>
<div style="left:89.80px;top:316px;transform:matrix(1,.0005,0,1,0,0.74);font-size:5.9px;line-height:7.67px;color:#2e2e2e;font-weight:700;letter-spacing:0.165px;">8x (256QAM MIMO)</div>
<div style="left:30.90px;top:328.00px;width:140.00px;height:79.20px;background:#f6f6f6;"></div>
<svg style="left:30.9px;top:328px" width="140" height="79.2" viewBox="0 0 140 79.2" shape-rendering="crispEdges"><rect x="0" y="7.199999999999989" width="140" height="72.0" fill="#f8a450"/><path d="M0 79.2 L0.0 8.2 L2.0 8.2 L2.0 8.2 L4.0 8.2 L4.0 8.2 L6.0 8.2 L6.0 8.2 L8.0 8.2 L8.0 8.2 L10.0 8.2 L10.0 9.1 L12.0 9.1 L12.0 9.1 L14.0 9.1 L14.0 8.2 L16.0 8.2 L16.0 8.2 L18.0 8.2 L18.0 8.2 L20.0 8.2 L20.0 8.2 L22.0 8.2 L22.0 8.2 L24.0 8.2 L24.0 8.2 L26.0 8.2 L26.0 8.2 L28.0 8.2 L28.0 8.2 L30.0 8.2 L30.0 9.1 L32.0 9.1 L32.0 8.2 L34.0 8.2 L34.0 8.2 L36.0 8.2 L36.0 8.2 L38.0 8.2 L38.0 8.2 L40.0 8.2 L40.0 9.4 L42.0 9.4 L42.0 9.4 L44.0 9.4 L44.0 9.4 L46.0 9.4 L46.0 8.2 L48.0 8.2 L48.0 8.2 L50.0 8.2 L50.0 9.1 L52.0 9.1 L52.0 8.2 L54.0 8.2 L54.0 8.2 L56.0 8.2 L56.0 8.2 L58.0 8.2 L58.0 8.2 L60.0 8.2 L60.0 8.2 L62.0 8.2 L62.0 8.2 L64.0 8.2 L64.0 8.2 L66.0 8.2 L66.0 8.2 L68.0 8.2 L68.0 8.2 L70.0 8.2 L70.0 8.2 L72.0 8.2 L72.0 8.2 L74.0 8.2 L74.0 9.1 L76.0 9.1 L76.0 9.1 L78.0 9.1 L78.0 8.2 L80.0 8.2 L80.0 8.2 L82.0 8.2 L82.0 8.2 L84.0 8.2 L84.0 8.2 L86.0 8.2 L86.0 8.2 L88.0 8.2 L88.0 8.2 L90.0 8.2 L90.0 8.2 L92.0 8.2 L92.0 9.4 L94.0 9.4 L94.0 9.4 L96.0 9.4 L96.0 8.2 L98.0 8.2 L98.0 8.2 L100.0 8.2 L100.0 8.2 L102.0 8.2 L102.0 8.2 L104.0 8.2 L104.0 8.2 L106.0 8.2 L106.0 8.2 L108.0 8.2 L108.0 8.2 L110.0 8.2 L110.0 9.1 L112.0 9.1 L112.0 8.2 L114.0 8.2 L114.0 8.2 L116.0 8.2 L116.0 8.2 L118.0 8.2 L118.0 8.2 L120.0 8.2 L120.0 8.2 L122.0 8.2 L122.0 8.2 L124.0 8.2 L124.0 8.2 L126.0 8.2 L126.0 8.2 L128.0 8.2 L128.0 8.2 L130.0 8.2 L130.0 9.1 L132.0 9.1 L132.0 8.2 L134.0 8.2 L134.0 8.2 L136.0 8.2 L136.0 9.1 L138.0 9.1 L138.0 8.2 L140.0 8.2 L140 79.2 Z" fill="#4a9bbb"/><path d="M2.0 7.199999999999989 V79.2M4.0 7.199999999999989 V79.2M6.0 7.199999999999989 V79.2M8.0 7.199999999999989 V79.2M10.0 7.199999999999989 V79.2M12.0 7.199999999999989 V79.2M14.0 7.199999999999989 V79.2M16.0 7.199999999999989 V79.2M18.0 7.199999999999989 V79.2M20.0 7.199999999999989 V79.2M22.0 7.199999999999989 V79.2M24.0 7.199999999999989 V79.2M26.0 7.199999999999989 V79.2M28.0 7.199999999999989 V79.2M30.0 7.199999999999989 V79.2M32.0 7.199999999999989 V79.2M34.0 7.199999999999989 V79.2M36.0 7.199999999999989 V79.2M38.0 7.199999999999989 V79.2M40.0 7.199999999999989 V79.2M42.0 7.199999999999989 V79.2M44.0 7.199999999999989 V79.2M46.0 7.199999999999989 V79.2M48.0 7.199999999999989 V79.2M50.0 7.199999999999989 V79.2M52.0 7.199999999999989 V79.2M54.0 7.199999999999989 V79.2M56.0 7.199999999999989 V79.2M58.0 7.199999999999989 V79.2M60.0 7.199999999999989 V79.2M62.0 7.199999999999989 V79.2M64.0 7.199999999999989 V79.2M66.0 7.199999999999989 V79.2M68.0 7.199999999999989 V79.2M70.0 7.199999999999989 V79.2M72.0 7.199999999999989 V79.2M74.0 7.199999999999989 V79.2M76.0 7.199999999999989 V79.2M78.0 7.199999999999989 V79.2M80.0 7.199999999999989 V79.2M82.0 7.199999999999989 V79.2M84.0 7.199999999999989 V79.2M86.0 7.199999999999989 V79.2M88.0 7.199999999999989 V79.2M90.0 7.199999999999989 V79.2M92.0 7.199999999999989 V79.2M94.0 7.199999999999989 V79.2M96.0 7.199999999999989 V79.2M98.0 7.199999999999989 V79.2M100.0 7.199999999999989 V79.2M102.0 7.199999999999989 V79.2M104.0 7.199999999999989 V79.2M106.0 7.199999999999989 V79.2M108.0 7.199999999999989 V79.2M110.0 7.199999999999989 V79.2M112.0 7.199999999999989 V79.2M114.0 7.199999999999989 V79.2M116.0 7.199999999999989 V79.2M118.0 7.199999999999989 V79.2M120.0 7.199999999999989 V79.2M122.0 7.199999999999989 V79.2M124.0 7.199999999999989 V79.2M126.0 7.199999999999989 V79.2M128.0 7.199999999999989 V79.2M130.0 7.199999999999989 V79.2M132.0 7.199999999999989 V79.2M134.0 7.199999999999989 V79.2M136.0 7.199999999999989 V79.2M138.0 7.199999999999989 V79.2" stroke="#000" stroke-opacity=".07" stroke-width=".5" fill="none"/></svg>
<div style="left:30.30px;top:328.00px;width:0.60px;height:79.60px;background:#707070;"></div>
<div style="left:28.40px;top:328.00px;width:2.00px;height:0.50px;background:#777;"></div>
<div style="left:17.30px;top:343px;transform:matrix(1,.0005,0,1,0,0.16);font-size:5.1px;line-height:6.63px;color:#555;-webkit-text-stroke:0;">300</div>
<div style="left:28.00px;top:346.10px;width:2.40px;height:0.50px;background:#777;"></div>
<div style="left:17.30px;top:363px;transform:matrix(1,.0005,0,1,0,0.36);font-size:5.1px;line-height:6.63px;color:#555;-webkit-text-stroke:0;">200</div>
<div style="left:28.00px;top:366.30px;width:2.40px;height:0.50px;background:#777;"></div>
<div style="left:17.30px;top:383px;transform:matrix(1,.0005,0,1,0,0.76);font-size:5.1px;line-height:6.63px;color:#555;-webkit-text-stroke:0;">100</div>
<div style="left:28.00px;top:386.70px;width:2.40px;height:0.50px;background:#777;"></div>
<div style="left:22.96px;top:403px;transform:matrix(1,.0005,0,1,0,0.96);font-size:5.1px;line-height:6.63px;color:#555;-webkit-text-stroke:0;">0</div>
<div style="left:28.00px;top:406.90px;width:2.40px;height:0.50px;background:#777;"></div>
<div style="left:35.00px;top:411.40px;width:5.00px;height:4.90px;background:#f7941d;"></div>
<div style="left:43.00px;top:411px;transform:matrix(1,.0005,0,1,0,0.09);font-size:5.2px;line-height:6.76px;color:#2e2e2e;font-weight:700;letter-spacing:0.045px;">CAPACITY</div>
<div style="left:35.00px;top:418px;transform:matrix(1,.0005,0,1,0,0.71);font-size:5.8px;line-height:7.54px;color:#2e2e2e;font-weight:700;letter-spacing:0.138px;">354.93 Mbps</div>
<div style="left:101.30px;top:411.40px;width:5.00px;height:4.90px;background:#1c8ad6;"></div>
<div style="left:109.50px;top:411px;transform:matrix(1,.0005,0,1,0,0.09);font-size:5.2px;line-height:6.76px;color:#2e2e2e;font-weight:700;letter-spacing:0.069px;">THROUGHPUT</div>
<div style="left:101.80px;top:418px;transform:matrix(1,.0005,0,1,0,0.71);font-size:5.8px;line-height:7.54px;color:#2e2e2e;font-weight:700;letter-spacing:0.010px;">337 Mbps</div>
<div style="left:209.50px;top:307px;transform:matrix(1,.0005,0,1,0,0.82);font-size:5.6px;line-height:7.28px;color:#b23bb0;font-weight:700;letter-spacing:0.065px;">REMOTE RX  REAL-TIME CAPACITY / SPEED</div>
<div style="left:216.70px;top:316px;transform:matrix(1,.0005,0,1,0,0.84);font-size:5.1px;line-height:6.63px;color:#2e2e2e;font-weight:700;letter-spacing:0.097px;">MODULATION RATE</div>
<div style="left:269.30px;top:316px;transform:matrix(1,.0005,0,1,0,0.74);font-size:5.9px;line-height:7.67px;color:#2e2e2e;font-weight:700;letter-spacing:0.221px;">8x (256QAM MIMO)</div>
<div style="left:210.90px;top:328.00px;width:140.00px;height:79.20px;background:#f6f6f6;"></div>
<svg style="left:210.9px;top:328px" width="140" height="79.2" viewBox="0 0 140 79.2" shape-rendering="crispEdges"><rect x="0" y="7" width="140" height="72.19999999999999" fill="#fba554"/><path d="M0 79.2 L0.0 55.1 L2.0 55.1 L2.0 54.8 L4.0 54.8 L4.0 54.8 L6.0 54.8 L6.0 54.8 L8.0 54.8 L8.0 55.1 L10.0 55.1 L10.0 55.1 L12.0 55.1 L12.0 54.8 L14.0 54.8 L14.0 54.8 L16.0 54.8 L16.0 55.3 L18.0 55.3 L18.0 55.3 L20.0 55.3 L20.0 54.8 L22.0 54.8 L22.0 55.1 L24.0 55.1 L24.0 54.6 L26.0 54.6 L26.0 55.3 L28.0 55.3 L28.0 54.8 L30.0 54.8 L30.0 55.3 L32.0 55.3 L32.0 54.8 L34.0 54.8 L34.0 55.3 L36.0 55.3 L36.0 54.8 L38.0 54.8 L38.0 54.8 L40.0 54.8 L40.0 54.8 L42.0 54.8 L42.0 54.8 L44.0 54.8 L44.0 54.8 L46.0 54.8 L46.0 54.8 L48.0 54.8 L48.0 55.3 L50.0 55.3 L50.0 55.3 L52.0 55.3 L52.0 54.8 L54.0 54.8 L54.0 54.8 L56.0 54.8 L56.0 55.1 L58.0 55.1 L58.0 54.8 L60.0 54.8 L60.0 55.3 L62.0 55.3 L62.0 54.8 L64.0 54.8 L64.0 54.8 L66.0 54.8 L66.0 54.6 L68.0 54.6 L68.0 54.8 L70.0 54.8 L70.0 54.8 L72.0 54.8 L72.0 54.8 L74.0 54.8 L74.0 54.8 L76.0 54.8 L76.0 54.8 L78.0 54.8 L78.0 55.1 L80.0 55.1 L80.0 55.1 L82.0 55.1 L82.0 55.1 L84.0 55.1 L84.0 55.3 L86.0 55.3 L86.0 55.1 L88.0 55.1 L88.0 54.6 L90.0 54.6 L90.0 55.3 L92.0 55.3 L92.0 54.6 L94.0 54.6 L94.0 55.3 L96.0 55.3 L96.0 54.8 L98.0 54.8 L98.0 55.3 L100.0 55.3 L100.0 55.3 L102.0 55.3 L102.0 54.8 L104.0 54.8 L104.0 55.1 L106.0 55.1 L106.0 54.6 L108.0 54.6 L108.0 54.6 L110.0 54.6 L110.0 54.6 L112.0 54.6 L112.0 54.8 L114.0 54.8 L114.0 54.8 L116.0 54.8 L116.0 55.1 L118.0 55.1 L118.0 54.8 L120.0 54.8 L120.0 55.3 L122.0 55.3 L122.0 54.8 L124.0 54.8 L124.0 55.3 L126.0 55.3 L126.0 54.8 L128.0 54.8 L128.0 54.8 L130.0 54.8 L130.0 55.1 L132.0 55.1 L132.0 55.3 L134.0 55.3 L134.0 54.8 L136.0 54.8 L136.0 54.8 L138.0 54.8 L138.0 55.1 L140.0 55.1 L140 79.2 Z" fill="#4a9bbb"/><path d="M2.0 7 V79.2M4.0 7 V79.2M6.0 7 V79.2M8.0 7 V79.2M10.0 7 V79.2M12.0 7 V79.2M14.0 7 V79.2M16.0 7 V79.2M18.0 7 V79.2M20.0 7 V79.2M22.0 7 V79.2M24.0 7 V79.2M26.0 7 V79.2M28.0 7 V79.2M30.0 7 V79.2M32.0 7 V79.2M34.0 7 V79.2M36.0 7 V79.2M38.0 7 V79.2M40.0 7 V79.2M42.0 7 V79.2M44.0 7 V79.2M46.0 7 V79.2M48.0 7 V79.2M50.0 7 V79.2M52.0 7 V79.2M54.0 7 V79.2M56.0 7 V79.2M58.0 7 V79.2M60.0 7 V79.2M62.0 7 V79.2M64.0 7 V79.2M66.0 7 V79.2M68.0 7 V79.2M70.0 7 V79.2M72.0 7 V79.2M74.0 7 V79.2M76.0 7 V79.2M78.0 7 V79.2M80.0 7 V79.2M82.0 7 V79.2M84.0 7 V79.2M86.0 7 V79.2M88.0 7 V79.2M90.0 7 V79.2M92.0 7 V79.2M94.0 7 V79.2M96.0 7 V79.2M98.0 7 V79.2M100.0 7 V79.2M102.0 7 V79.2M104.0 7 V79.2M106.0 7 V79.2M108.0 7 V79.2M110.0 7 V79.2M112.0 7 V79.2M114.0 7 V79.2M116.0 7 V79.2M118.0 7 V79.2M120.0 7 V79.2M122.0 7 V79.2M124.0 7 V79.2M126.0 7 V79.2M128.0 7 V79.2M130.0 7 V79.2M132.0 7 V79.2M134.0 7 V79.2M136.0 7 V79.2M138.0 7 V79.2" stroke="#000" stroke-opacity=".07" stroke-width=".5" fill="none"/></svg>
<div style="left:210.30px;top:328.00px;width:0.60px;height:79.60px;background:#707070;"></div>
<div style="left:208.40px;top:328.00px;width:2.00px;height:0.50px;background:#777;"></div>
<div style="left:197.30px;top:328px;transform:matrix(1,.0005,0,1,0,0.36);font-size:5.1px;line-height:6.63px;color:#555;-webkit-text-stroke:0;">120</div>
<div style="left:208.00px;top:331.30px;width:2.40px;height:0.50px;background:#777;"></div>
<div style="left:197.30px;top:340px;transform:matrix(1,.0005,0,1,0,0.96);font-size:5.1px;line-height:6.63px;color:#555;-webkit-text-stroke:0;">100</div>
<div style="left:208.00px;top:343.90px;width:2.40px;height:0.50px;background:#777;"></div>
<div style="left:200.13px;top:354px;transform:matrix(1,.0005,0,1,0,0.06);font-size:5.1px;line-height:6.63px;color:#555;-webkit-text-stroke:0;">80</div>
<div style="left:208.00px;top:357.00px;width:2.40px;height:0.50px;background:#777;"></div>
<div style="left:200.13px;top:366px;transform:matrix(1,.0005,0,1,0,0.76);font-size:5.1px;line-height:6.63px;color:#555;-webkit-text-stroke:0;">60</div>
<div style="left:208.00px;top:369.70px;width:2.40px;height:0.50px;background:#777;"></div>
<div style="left:200.13px;top:379px;transform:matrix(1,.0005,0,1,0,0.06);font-size:5.1px;line-height:6.63px;color:#555;-webkit-text-stroke:0;">40</div>
<div style="left:208.00px;top:382.00px;width:2.40px;height:0.50px;background:#777;"></div>
<div style="left:200.13px;top:391px;transform:matrix(1,.0005,0,1,0,0.76);font-size:5.1px;line-height:6.63px;color:#555;-webkit-text-stroke:0;">20</div>
<div style="left:208.00px;top:394.70px;width:2.40px;height:0.50px;background:#777;"></div>
<div style="left:202.96px;top:403px;transform:matrix(1,.0005,0,1,0,0.96);font-size:5.1px;line-height:6.63px;color:#555;-webkit-text-stroke:0;">0</div>
<div style="left:208.00px;top:406.90px;width:2.40px;height:0.50px;background:#777;"></div>
<div style="left:215.00px;top:411.40px;width:5.00px;height:4.90px;background:#f7941d;"></div>
<div style="left:223.00px;top:411px;transform:matrix(1,.0005,0,1,0,0.09);font-size:5.2px;line-height:6.76px;color:#2e2e2e;font-weight:700;letter-spacing:0.045px;">CAPACITY</div>
<div style="left:215.00px;top:418px;transform:matrix(1,.0005,0,1,0,0.71);font-size:5.8px;line-height:7.54px;color:#2e2e2e;font-weight:700;letter-spacing:0.122px;">115.14 Mbps</div>
<div style="left:281.30px;top:411.40px;width:5.00px;height:4.90px;background:#1c8ad6;"></div>
<div style="left:289.50px;top:411px;transform:matrix(1,.0005,0,1,0,0.09);font-size:5.2px;line-height:6.76px;color:#2e2e2e;font-weight:700;letter-spacing:0.069px;">THROUGHPUT</div>
<div style="left:281.80px;top:418px;transform:matrix(1,.0005,0,1,0,0.71);font-size:5.8px;line-height:7.54px;color:#2e2e2e;font-weight:700;letter-spacing:-0.003px;">37.1 Mbps</div>
<div style="left:0.00px;top:446.00px;width:365.00px;height:1.00px;background:#e6e6e6;"></div>
<div style="left:11.40px;top:460px;transform:matrix(1,.0005,0,1,0,0.41);font-size:5.8px;line-height:7.54px;color:#2e2e2e;font-weight:700;letter-spacing:0.068px;">DEVICE</div>
<div style="left:12.00px;top:480px;transform:matrix(1,.0005,0,1,0,0.29);font-size:5.5px;line-height:7.15px;color:#666;font-weight:700;letter-spacing:0.094px;">DEVICE MODEL</div>
<div style="left:190.00px;top:480px;transform:matrix(1,.0005,0,1,0,0.29);font-size:5.5px;line-height:7.15px;color:#666;font-weight:700;letter-spacing:0.046px;">NETWORK MODE</div>
<div style="left:0.00px;top:482.40px;width:371.00px;height:2.60px;background:#32322f;"></div>
</div>
</div></body></html>
